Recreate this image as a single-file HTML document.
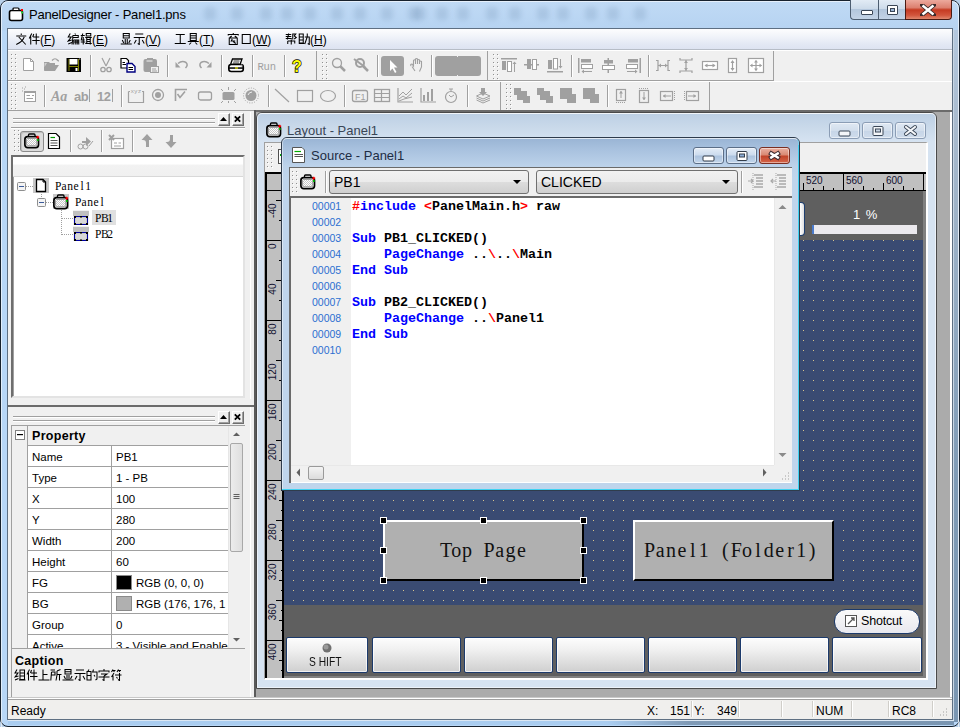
<!DOCTYPE html><html><head><meta charset="utf-8"><style>
*{box-sizing:border-box}
html,body{margin:0;padding:0;width:960px;height:727px;overflow:hidden;background:#b9d1ea}
body{position:relative;font-family:"Liberation Sans",sans-serif;font-size:12px;color:#000}
div,span{position:absolute}
.t{white-space:nowrap}
</style></head><body><div style="left:0px;top:0px;width:960px;height:727px;border:1px solid #18222e;border-radius:8px;background:linear-gradient(180deg,#c0daf5 0,#b6d3f1 29px,#b8d7f7 30px,#b8d7f7 100%)"></div>
<div style="left:204px;top:7px;width:12px;height:13px;background:rgba(70,100,140,.15);border-radius:4px;filter:blur(2.5px)"></div>
<div style="left:231px;top:7px;width:12px;height:13px;background:rgba(70,100,140,.15);border-radius:4px;filter:blur(2.5px)"></div>
<div style="left:260px;top:7px;width:12px;height:13px;background:rgba(70,100,140,.15);border-radius:4px;filter:blur(2.5px)"></div>
<div style="left:281px;top:7px;width:12px;height:13px;background:rgba(70,100,140,.15);border-radius:4px;filter:blur(2.5px)"></div>
<div style="left:304px;top:7px;width:12px;height:13px;background:rgba(70,100,140,.15);border-radius:4px;filter:blur(2.5px)"></div>
<div style="left:331px;top:7px;width:12px;height:13px;background:rgba(70,100,140,.15);border-radius:4px;filter:blur(2.5px)"></div>
<div style="left:354px;top:7px;width:12px;height:13px;background:rgba(70,100,140,.15);border-radius:4px;filter:blur(2.5px)"></div>
<div style="left:381px;top:7px;width:12px;height:13px;background:rgba(70,100,140,.15);border-radius:4px;filter:blur(2.5px)"></div>
<div style="left:408px;top:7px;width:12px;height:13px;background:rgba(70,100,140,.15);border-radius:4px;filter:blur(2.5px)"></div>
<div style="left:414px;top:7px;width:12px;height:13px;background:rgba(70,100,140,.15);border-radius:4px;filter:blur(2.5px)"></div>
<div style="left:436px;top:7px;width:12px;height:13px;background:rgba(70,100,140,.15);border-radius:4px;filter:blur(2.5px)"></div>
<div style="left:457px;top:7px;width:12px;height:13px;background:rgba(70,100,140,.15);border-radius:4px;filter:blur(2.5px)"></div>
<div style="left:486px;top:7px;width:12px;height:13px;background:rgba(70,100,140,.15);border-radius:4px;filter:blur(2.5px)"></div>
<div style="left:509px;top:7px;width:12px;height:13px;background:rgba(70,100,140,.15);border-radius:4px;filter:blur(2.5px)"></div>
<div style="left:537px;top:7px;width:12px;height:13px;background:rgba(70,100,140,.15);border-radius:4px;filter:blur(2.5px)"></div>
<div style="left:557px;top:7px;width:12px;height:13px;background:rgba(70,100,140,.15);border-radius:4px;filter:blur(2.5px)"></div>
<div style="left:585px;top:7px;width:12px;height:13px;background:rgba(70,100,140,.15);border-radius:4px;filter:blur(2.5px)"></div>
<div style="left:607px;top:7px;width:12px;height:13px;background:rgba(70,100,140,.15);border-radius:4px;filter:blur(2.5px)"></div>
<div style="left:634px;top:7px;width:12px;height:13px;background:rgba(70,100,140,.15);border-radius:4px;filter:blur(2.5px)"></div>
<div style="left:1px;top:1px;width:958px;height:726px;border:1px solid rgba(255,255,255,.6);border-bottom:none;border-radius:7px 7px 0 0"></div>
<svg style="position:absolute;left:8px;top:7px" width="16" height="15" viewBox="0 0 16 15">
<rect x="1.5" y="3.5" width="13" height="10" rx="2" fill="#fff" stroke="#000" stroke-width="1.6"/>
<rect x="5" y="1" width="6" height="2.5" rx="1" fill="#fff" stroke="#000" stroke-width="1.2"/>
<rect x="13" y="2" width="2" height="2" fill="#f00"/><rect x="13" y="4.5" width="2" height="2" fill="#3c3"/></svg>
<span class="t" style="left:29px;top:7px;font-size:13px;color:#000;letter-spacing:-.2px">PanelDesigner - Panel1.pns</span>
<div style="left:850px;top:0px;width:29px;height:20px;border:1px solid #4d5d70;border-top:none;border-right:none;border-radius:0 0 0 4px;background:linear-gradient(180deg,#e2ebf5 0,#cddbea 45%,#b3c6dc 50%,#c3d3e6 100%)"></div>
<div style="left:878px;top:0px;width:27px;height:20px;border:1px solid #4d5d70;border-top:none;border-right:none;background:linear-gradient(180deg,#e2ebf5 0,#cddbea 45%,#b3c6dc 50%,#c3d3e6 100%)"></div>
<div style="left:905px;top:0px;width:47px;height:20px;border:1px solid #4a1a12;border-top:none;border-radius:0 0 4px 0;background:linear-gradient(180deg,#eca99d 0,#dc8070 40%,#c53a22 52%,#d2553c 80%,#e0876d 100%)"></div>
<div style="left:861px;top:10px;width:12px;height:5px;background:#fff;border:1px solid #3a4656;border-radius:1px"></div>
<div style="left:887px;top:5px;width:11px;height:10px;background:#fff;border:1px solid #3a4656;border-radius:1px"></div>
<div style="left:890px;top:8px;width:5px;height:4px;background:#9eb6d6;border:1px solid #3a4656"></div>
<svg style="position:absolute;left:920px;top:4px" width="16" height="12" viewBox="0 0 16 12">
<path d="M2 1 L14 11 M14 1 L2 11" stroke="#3a2a2a" stroke-width="4.2" stroke-linecap="square"/>
<path d="M2.5 1.5 L13.5 10.5 M13.5 1.5 L2.5 10.5" stroke="#fff" stroke-width="2.4"/></svg>
<div style="left:953px;top:30px;width:1px;height:690px;background:#c8d6e4"></div>
<div style="left:954px;top:30px;width:4px;height:692px;background:linear-gradient(180deg,#b4c8de 0,#a8bacd 100px,#7f9bb6 450px,#7a96b2 100%)"></div>
<div style="left:958px;top:30px;width:1px;height:692px;background:#e4ecf6"></div>
<div style="left:8px;top:721px;width:946px;height:4px;background:linear-gradient(90deg,#aacdf0 0,#aacdf0 600px,#7f9ab6 680px,#7a96b2 100%)"></div>
<div style="left:8px;top:720px;width:946px;height:1px;background:#dce8f4"></div>
<div style="left:7px;top:28px;width:946px;height:692px;background:#5e6f82"></div>
<div style="left:8px;top:29px;width:944px;height:690px;background:#f0f0f0"></div>
<div style="left:8px;top:29px;width:944px;height:21px;background:linear-gradient(180deg,#fdfdfe 0,#f0f3f9 40%,#e3e8f4 75%,#dde3f1 100%);border-bottom:1px solid #b6bcc6"></div>
<span class="t" style="left:15px;top:33px;font-size:12px;color:#000"><svg width="12.5" height="12" viewBox="0 0 12.500 12" style="vertical-align:-1px"><path d="M6 0.5V2 M1 3H11 M3.5 4L10.5 11.5 M9 4Q7 9 1 11.5" transform="translate(0.25,0)" fill="none" stroke="#000" stroke-width="1.05"/></svg><svg width="12.5" height="12" viewBox="0 0 12.500 12" style="vertical-align:-1px"><path d="M3.5 0.5L1 5.5 M2.5 3.5V11.5 M5.5 1L4.5 4 M5 4H11 M4 7.5H11.5 M8 0.5V11.5" transform="translate(0.25,0)" fill="none" stroke="#000" stroke-width="1.05"/></svg>(<u>F</u>)</span>
<span class="t" style="left:67px;top:33px;font-size:12px;color:#000"><svg width="12.5" height="12" viewBox="0 0 12.500 12" style="vertical-align:-1px"><path d="M3 0.5L1 4H4L1 8L4.5 7 M1 11L4.5 9.5 M7.5 0.5L8.5 1.5 M5.5 2.5H11V4.5H5.5 M5.5 2.5V6L4.8 11.5 M6.5 7H11.5V11.5 M6.5 7V11.5 M8.5 7V11.5 M10 7V11.5 M6.5 9H11.5" transform="translate(0.25,0)" fill="none" stroke="#000" stroke-width="1.05"/></svg><svg width="12.5" height="12" viewBox="0 0 12.500 12" style="vertical-align:-1px"><path d="M0.5 2.5H4.5 M2.5 0.5L1 7H4.5 M0.5 9H5 M3 4V11.5 M6 0.5H10.5V3H6Z M5 4.5H11.5 M6.5 4.5V11 M10 4.5V11.5 M6.5 6.5H10 M6.5 8.5H10 M5 10.5H11.5" transform="translate(0.25,0)" fill="none" stroke="#000" stroke-width="1.05"/></svg>(<u>E</u>)</span>
<span class="t" style="left:120px;top:33px;font-size:12px;color:#000"><svg width="12.5" height="12" viewBox="0 0 12.500 12" style="vertical-align:-1px"><path d="M3 0.5H9V5H3Z M3 2.75H9 M5 6V10.5 M7 6V10.5 M2 7L3.5 10 M10 7L8.5 10 M0.5 11H11.5" transform="translate(0.25,0)" fill="none" stroke="#000" stroke-width="1.05"/></svg><svg width="12.5" height="12" viewBox="0 0 12.500 12" style="vertical-align:-1px"><path d="M2 1H10 M0.5 4.5H11.5 M6 4.5V11.5L4.5 10.5 M3 7L1 10.5 M9 7L11 10.5" transform="translate(0.25,0)" fill="none" stroke="#000" stroke-width="1.05"/></svg>(<u>V</u>)</span>
<span class="t" style="left:174px;top:33px;font-size:12px;color:#000"><svg width="12.5" height="12" viewBox="0 0 12.500 12" style="vertical-align:-1px"><path d="M1.5 1.5H10.5 M6 1.5V10.5 M0.5 10.5H11.5" transform="translate(0.25,0)" fill="none" stroke="#000" stroke-width="1.05"/></svg><svg width="12.5" height="12" viewBox="0 0 12.500 12" style="vertical-align:-1px"><path d="M3 0.5H9V7.5H3Z M3 2.75H9 M3 5H9 M0.5 8.5H11.5 M4 9.5L2 11.5 M8 9.5L10 11.5" transform="translate(0.25,0)" fill="none" stroke="#000" stroke-width="1.05"/></svg>(<u>T</u>)</span>
<span class="t" style="left:227px;top:33px;font-size:12px;color:#000"><svg width="12.5" height="12" viewBox="0 0 12.500 12" style="vertical-align:-1px"><path d="M6 0V1.2 M1 2.5V1.5H11V2.5 M4.5 3L2.5 4.5 M7.5 3L9.5 4.5 M2 5H10V11.5H2Z M5 6L4 8H8 M6 8.5L8.5 10.5" transform="translate(0.25,0)" fill="none" stroke="#000" stroke-width="1.05"/></svg><svg width="12.5" height="12" viewBox="0 0 12.500 12" style="vertical-align:-1px"><path d="M2 1.5H10V10.5H2Z" transform="translate(0.25,0)" fill="none" stroke="#000" stroke-width="1.05"/></svg>(<u>W</u>)</span>
<span class="t" style="left:285px;top:33px;font-size:12px;color:#000"><svg width="12.5" height="12" viewBox="0 0 12.500 12" style="vertical-align:-1px"><path d="M0.5 1.5H6 M0.5 3.5H6 M0.5 5.5H6.5 M3.5 0.5L2 6.5 M7.5 0.5V6.5 M7.5 1H10.5L9 3L11 4.5L9 6 M2.5 8V11 M2.5 8H9.5V10.5 M6 6.5V11.5" transform="translate(0.25,0)" fill="none" stroke="#000" stroke-width="1.05"/></svg><svg width="12.5" height="12" viewBox="0 0 12.500 12" style="vertical-align:-1px"><path d="M1 1H5V10H1Z M1 4H5 M1 7H5 M0.5 10.5H6 M6.5 4H11V11.5L9.5 10.5 M9 0.5V4L6.5 11" transform="translate(0.25,0)" fill="none" stroke="#000" stroke-width="1.05"/></svg>(<u>H</u>)</span>
<div style="left:8px;top:50px;width:944px;height:1px;background:#fff"></div>
<div style="left:8px;top:80px;width:309px;height:1px;background:#a0a0a0"></div>
<div style="left:316px;top:51px;width:1px;height:30px;background:#a0a0a0"></div>
<div style="left:317px;top:80px;width:171px;height:1px;background:#a0a0a0"></div>
<div style="left:487px;top:51px;width:1px;height:30px;background:#a0a0a0"></div>
<div style="left:488px;top:80px;width:286px;height:1px;background:#a0a0a0"></div>
<div style="left:773px;top:51px;width:1px;height:30px;background:#a0a0a0"></div>
<div style="left:8px;top:81px;width:944px;height:1px;background:#fff"></div>
<div style="left:8px;top:110px;width:493px;height:1px;background:#a0a0a0"></div>
<div style="left:500px;top:82px;width:1px;height:29px;background:#a0a0a0"></div>
<div style="left:501px;top:110px;width:209px;height:1px;background:#a0a0a0"></div>
<div style="left:709px;top:82px;width:1px;height:29px;background:#a0a0a0"></div>
<div style="left:8px;top:110px;width:246px;height:1px;background:#a0a0a0"></div>
<div style="left:8px;top:112px;width:246px;height:587px;background:#f0f0f0"></div>
<div style="left:250px;top:112px;width:1px;height:587px;background:#fff"></div>
<div style="left:254px;top:110px;width:1px;height:589px;background:#a0a0a0"></div>
<div style="left:218px;top:113px;width:12px;height:13px;background:#f0f0f0;border:1px solid;border-color:#fff #6e6e6e #6e6e6e #fff;box-shadow:inset -1px -1px 0 #a0a0a0"></div>
<div style="left:232px;top:113px;width:12px;height:13px;background:#f0f0f0;border:1px solid;border-color:#fff #6e6e6e #6e6e6e #fff;box-shadow:inset -1px -1px 0 #a0a0a0"></div>
<div style="left:20px;top:131px;width:24px;height:21px;border:1px solid #8a8a8a;border-radius:3px;background:#dcdcdc;box-shadow:inset 1px 1px 0 #c0c0c0"></div>
<div style="left:11px;top:155px;width:234px;height:243px;background:#fff;border:2px solid;border-color:#6e6e6e #e3e3e3 #e3e3e3 #6e6e6e;box-shadow:inset 1px 1px 0 #a0a0a0"></div>
<div style="left:13px;top:157px;width:230px;height:20px;background:linear-gradient(180deg,#fff 0,#fff 35%,#f2f2f2 45%,#f0f0f0 100%);border-bottom:1px solid #d8d8d8"></div>
<div style="left:33px;top:178px;width:16px;height:15px;background:#c8c8c8"></div>
<div style="left:53px;top:194px;width:16px;height:15px;background:#c8c8c8"></div>
<div style="left:73px;top:210px;width:16px;height:15px;background:#f0f0f0"></div>
<div style="left:73px;top:226px;width:16px;height:15px;background:#f0f0f0"></div>
<div style="left:92px;top:210px;width:24px;height:15px;background:#e0e0e0"></div>
<div class="t" style="left:55px;top:180px;width:36px;height:30px;font-family:'Liberation Serif',serif;font-size:11.5px;color:#000"><span style="left:0.00px;top:0;width:6.00px;text-align:center">P</span><span style="left:6.00px;top:0;width:6.00px;text-align:center">a</span><span style="left:12.00px;top:0;width:6.00px;text-align:center">n</span><span style="left:18.00px;top:0;width:6.00px;text-align:center">e</span><span style="left:24.00px;top:0;width:6.00px;text-align:center">l</span><span style="left:30.00px;top:0;width:6.00px;text-align:center">1</span></div>
<div class="t" style="left:75px;top:196px;width:30px;height:30px;font-family:'Liberation Serif',serif;font-size:11.5px;color:#000"><span style="left:0.00px;top:0;width:6.00px;text-align:center">P</span><span style="left:6.00px;top:0;width:6.00px;text-align:center">a</span><span style="left:12.00px;top:0;width:6.00px;text-align:center">n</span><span style="left:18.00px;top:0;width:6.00px;text-align:center">e</span><span style="left:24.00px;top:0;width:6.00px;text-align:center">l</span></div>
<div class="t" style="left:95px;top:212px;width:18px;height:30px;font-family:'Liberation Serif',serif;font-size:11.5px;color:#000"><span style="left:0.00px;top:0;width:6.00px;text-align:center">P</span><span style="left:6.00px;top:0;width:6.00px;text-align:center">B</span><span style="left:12.00px;top:0;width:6.00px;text-align:center">1</span></div>
<div class="t" style="left:95px;top:228px;width:18px;height:30px;font-family:'Liberation Serif',serif;font-size:11.5px;color:#000"><span style="left:0.00px;top:0;width:6.00px;text-align:center">P</span><span style="left:6.00px;top:0;width:6.00px;text-align:center">B</span><span style="left:12.00px;top:0;width:6.00px;text-align:center">2</span></div>
<div style="left:8px;top:399px;width:246px;height:6px;background:#f0f0f0"></div>
<div style="left:8px;top:405px;width:246px;height:2px;background:#6b6b6b"></div>
<div style="left:218px;top:411px;width:12px;height:13px;background:#f0f0f0;border:1px solid;border-color:#fff #6e6e6e #6e6e6e #fff;box-shadow:inset -1px -1px 0 #a0a0a0"></div>
<div style="left:232px;top:411px;width:12px;height:13px;background:#f0f0f0;border:1px solid;border-color:#fff #6e6e6e #6e6e6e #fff;box-shadow:inset -1px -1px 0 #a0a0a0"></div>
<div style="left:11px;top:425px;width:234px;height:224px;background:#f0f0f0;border-left:1px solid #a0a0a0;border-top:1px solid #a0a0a0"></div>
<div style="left:27px;top:445px;width:201px;height:204px;background:#fff"></div>
<div style="left:27px;top:426px;width:201px;height:20px;background:#f0f0f0;border-left:1px solid #a0a0a0;border-bottom:1px solid #a0a0a0"></div>
<span class="t" style="left:32px;top:429px;font-size:12.5px;font-weight:bold;color:#000;letter-spacing:.3px">Property</span>
<div style="left:27px;top:445px;width:201px;height:203px;overflow:hidden">
<div style="left:0;top:0px;width:201px;height:22px;border-left:1px solid #a0a0a0;border-bottom:1px solid #a0a0a0"></div>
<div style="left:84px;top:0px;width:1px;height:22px;background:#a0a0a0"></div>
<span class="t" style="left:5px;top:6px;font-size:11.5px;color:#000">Name</span>
<span class="t" style="left:89px;top:6px;font-size:11.5px;color:#000">PB1</span>
<div style="left:0;top:21px;width:201px;height:22px;border-left:1px solid #a0a0a0;border-bottom:1px solid #a0a0a0"></div>
<div style="left:84px;top:21px;width:1px;height:22px;background:#a0a0a0"></div>
<span class="t" style="left:5px;top:27px;font-size:11.5px;color:#000">Type</span>
<span class="t" style="left:89px;top:27px;font-size:11.5px;color:#000">1 - PB</span>
<div style="left:0;top:42px;width:201px;height:22px;border-left:1px solid #a0a0a0;border-bottom:1px solid #a0a0a0"></div>
<div style="left:84px;top:42px;width:1px;height:22px;background:#a0a0a0"></div>
<span class="t" style="left:5px;top:48px;font-size:11.5px;color:#000">X</span>
<span class="t" style="left:89px;top:48px;font-size:11.5px;color:#000">100</span>
<div style="left:0;top:63px;width:201px;height:22px;border-left:1px solid #a0a0a0;border-bottom:1px solid #a0a0a0"></div>
<div style="left:84px;top:63px;width:1px;height:22px;background:#a0a0a0"></div>
<span class="t" style="left:5px;top:69px;font-size:11.5px;color:#000">Y</span>
<span class="t" style="left:89px;top:69px;font-size:11.5px;color:#000">280</span>
<div style="left:0;top:84px;width:201px;height:22px;border-left:1px solid #a0a0a0;border-bottom:1px solid #a0a0a0"></div>
<div style="left:84px;top:84px;width:1px;height:22px;background:#a0a0a0"></div>
<span class="t" style="left:5px;top:90px;font-size:11.5px;color:#000">Width</span>
<span class="t" style="left:89px;top:90px;font-size:11.5px;color:#000">200</span>
<div style="left:0;top:105px;width:201px;height:22px;border-left:1px solid #a0a0a0;border-bottom:1px solid #a0a0a0"></div>
<div style="left:84px;top:105px;width:1px;height:22px;background:#a0a0a0"></div>
<span class="t" style="left:5px;top:111px;font-size:11.5px;color:#000">Height</span>
<span class="t" style="left:89px;top:111px;font-size:11.5px;color:#000">60</span>
<div style="left:0;top:126px;width:201px;height:22px;border-left:1px solid #a0a0a0;border-bottom:1px solid #a0a0a0"></div>
<div style="left:84px;top:126px;width:1px;height:22px;background:#a0a0a0"></div>
<span class="t" style="left:5px;top:132px;font-size:11.5px;color:#000">FG</span>
<div style="left:89px;top:130px;width:16px;height:15px;border:1px solid #8a8a8a;background:#000"></div>
<span class="t" style="left:109px;top:132px;font-size:11.5px;color:#000">RGB (0, 0, 0)</span>
<div style="left:0;top:147px;width:201px;height:22px;border-left:1px solid #a0a0a0;border-bottom:1px solid #a0a0a0"></div>
<div style="left:84px;top:147px;width:1px;height:22px;background:#a0a0a0"></div>
<span class="t" style="left:5px;top:153px;font-size:11.5px;color:#000">BG</span>
<div style="left:89px;top:151px;width:16px;height:15px;border:1px solid #8a8a8a;background:#b0b0b0"></div>
<span class="t" style="left:109px;top:153px;font-size:11.5px;color:#000">RGB (176, 176, 1</span>
<div style="left:0;top:168px;width:201px;height:22px;border-left:1px solid #a0a0a0;border-bottom:1px solid #a0a0a0"></div>
<div style="left:84px;top:168px;width:1px;height:22px;background:#a0a0a0"></div>
<span class="t" style="left:5px;top:174px;font-size:11.5px;color:#000">Group</span>
<span class="t" style="left:89px;top:174px;font-size:11.5px;color:#000">0</span>
<div style="left:0;top:189px;width:201px;height:22px;border-left:1px solid #a0a0a0;border-bottom:1px solid #a0a0a0"></div>
<div style="left:84px;top:189px;width:1px;height:22px;background:#a0a0a0"></div>
<span class="t" style="left:5px;top:195px;font-size:11.5px;color:#000">Active</span>
<span class="t" style="left:89px;top:195px;font-size:11.5px;color:#000">3 - Visible and Enabled</span>
</div>
<div style="left:228px;top:426px;width:17px;height:222px;background:#f0f0f0;border-left:1px solid #e6e6e6"></div>
<div style="left:230px;top:443px;width:13px;height:109px;background:linear-gradient(90deg,#ececec,#dedede);border:1px solid #a8a8a8;border-radius:2px"></div>
<div style="left:11px;top:648px;width:234px;height:50px;background:#f0f0f0;border-top:1px solid #a0a0a0;border-left:1px solid #a0a0a0"></div>
<span class="t" style="left:15px;top:654px;font-size:12.5px;font-weight:bold;color:#000;letter-spacing:.3px">Caption</span>
<span class="t" style="left:14px;top:669px;font-size:12px;color:#000"><svg width="12" height="12" viewBox="0 0 12.000 12" style="vertical-align:-1px"><path d="M3 0.5L1 4H4L1 8L4.5 7 M1 11L4.5 9.5 M6 1H10.5V10.5H6Z M6 4H10.5 M6 7H10.5 M5 11H11.5" transform="translate(0.00,0)" fill="none" stroke="#000" stroke-width="1.05"/></svg><svg width="12" height="12" viewBox="0 0 12.000 12" style="vertical-align:-1px"><path d="M3.5 0.5L1 5.5 M2.5 3.5V11.5 M5.5 1L4.5 4 M5 4H11 M4 7.5H11.5 M8 0.5V11.5" transform="translate(0.00,0)" fill="none" stroke="#000" stroke-width="1.05"/></svg><svg width="12" height="12" viewBox="0 0 12.000 12" style="vertical-align:-1px"><path d="M5 0.5V11 M5 5.5H9.5 M0.5 11H11.5" transform="translate(0.00,0)" fill="none" stroke="#000" stroke-width="1.05"/></svg><svg width="12" height="12" viewBox="0 0 12.000 12" style="vertical-align:-1px"><path d="M0.5 1H5 M1.5 3H5V6H1.5 M1.5 3L0.8 11.5 M10.5 0.5L7 2 M7 2V6L6 11.5 M7 5.5H11.5 M9.5 5.5V11.5" transform="translate(0.00,0)" fill="none" stroke="#000" stroke-width="1.05"/></svg><svg width="12" height="12" viewBox="0 0 12.000 12" style="vertical-align:-1px"><path d="M3 0.5H9V5H3Z M3 2.75H9 M5 6V10.5 M7 6V10.5 M2 7L3.5 10 M10 7L8.5 10 M0.5 11H11.5" transform="translate(0.00,0)" fill="none" stroke="#000" stroke-width="1.05"/></svg><svg width="12" height="12" viewBox="0 0 12.000 12" style="vertical-align:-1px"><path d="M2 1H10 M0.5 4.5H11.5 M6 4.5V11.5L4.5 10.5 M3 7L1 10.5 M9 7L11 10.5" transform="translate(0.00,0)" fill="none" stroke="#000" stroke-width="1.05"/></svg><svg width="12" height="12" viewBox="0 0 12.000 12" style="vertical-align:-1px"><path d="M3 0.5L2 2 M1 2.5H5V11H1Z M1 6.5H5 M7.5 0.5L6.5 3.5 M7 3H11V10L9.5 11 M8 6L9 7.5" transform="translate(0.00,0)" fill="none" stroke="#000" stroke-width="1.05"/></svg><svg width="12" height="12" viewBox="0 0 12.000 12" style="vertical-align:-1px"><path d="M6 0V1.5 M1 3.5V2H11V3.5 M3 5H9L6 7 M6 7V11.5L4.5 10.5 M0.5 8H11.5" transform="translate(0.00,0)" fill="none" stroke="#000" stroke-width="1.05"/></svg><svg width="12" height="12" viewBox="0 0 12.000 12" style="vertical-align:-1px"><path d="M3 0.5L1.5 3 M2.5 1.5H5.5 M3.5 2L4.5 3 M8.5 0.5L7 3 M8 1.5H11 M9 2L10 3 M4 4L1.5 8 M3 6.5V11.5 M5 6H11.5 M9.5 4V11.5L8 10.5 M6.5 8L7.5 9.5" transform="translate(0.00,0)" fill="none" stroke="#000" stroke-width="1.05"/></svg></span>
<div style="left:254px;top:110px;width:698px;height:589px;background:#ababab"></div>
<div style="left:255px;top:110px;width:697px;height:2px;background:#6b6b6b"></div>
<div style="left:254px;top:110px;width:2px;height:589px;background:#5a5a5a"></div>
<div style="left:950px;top:112px;width:2px;height:587px;background:#fff"></div>
<div style="left:256px;top:112px;width:681px;height:577px;border:1px solid #4a4a4a;border-radius:6px 6px 0 0;background:linear-gradient(180deg,#bccfe4 0,#c9d9ea 14px,#d6e3f1 29px,#d6e3f1 100%)"></div>
<div style="left:257px;top:113px;width:679px;height:575px;border:1px solid rgba(255,255,255,.55);border-top-color:rgba(255,255,255,.8);border-radius:5px 5px 0 0"></div>
<span class="t" style="left:287px;top:123px;font-size:13px;color:#3a4656">Layout - Panel1</span>
<div style="left:829px;top:122px;width:31px;height:17px;border:1px solid #8b9db5;border-radius:3px;background:linear-gradient(180deg,#dfe8f3 0,#d2deec 50%,#c6d5e7 51%,#cfdcec 100%);box-shadow:inset 0 0 0 1px rgba(255,255,255,.5)"></div>
<div style="left:862px;top:122px;width:31px;height:17px;border:1px solid #8b9db5;border-radius:3px;background:linear-gradient(180deg,#dfe8f3 0,#d2deec 50%,#c6d5e7 51%,#cfdcec 100%);box-shadow:inset 0 0 0 1px rgba(255,255,255,.5)"></div>
<div style="left:895px;top:122px;width:31px;height:17px;border:1px solid #8b9db5;border-radius:3px;background:linear-gradient(180deg,#dfe8f3 0,#d2deec 50%,#c6d5e7 51%,#cfdcec 100%);box-shadow:inset 0 0 0 1px rgba(255,255,255,.5)"></div>
<div style="left:264px;top:142px;width:664px;height:538px;background:#f0f0f0;border-left:1px solid #a0a0a0;border-top:1px solid #a0a0a0;border-right:2px solid #fff;border-bottom:2px solid #fff"></div>
<div style="left:278px;top:149px;width:8px;height:15px;background:#fff;border:1px solid #505050"></div>
<div style="left:265px;top:172px;width:661px;height:506px;background:#808080"></div>
<div style="left:284px;top:191px;width:639px;height:485px;background:#5f5f5f"></div>
<svg style="position:absolute;left:284px;top:240px" width="639" height="365"><defs><pattern id="dp" x="-1" y="0" width="10" height="10" patternUnits="userSpaceOnUse"><rect x="0" y="0" width="1" height="1" fill="#d9c48e"/></pattern></defs><rect width="639" height="365" fill="#3a4b72"/><rect width="639" height="365" fill="url(#dp)"/></svg>
<div style="left:265px;top:172px;width:19px;height:506px;background:#c0c0c0;border-left:2px solid #000"></div>
<div style="left:265px;top:172px;width:661px;height:19px;background:#c0c0c0;border-top:2px solid #000;border-bottom:1px solid #000"></div>
<div style="left:265px;top:172px;width:19px;height:19px;background:#c0c0c0;border:2px solid #000;border-top-width:2px;border-right-width:2px;border-bottom-width:1px"></div>
<div style="left:282px;top:191px;width:2px;height:487px;background:#000"></div>
<svg style="position:absolute;left:265px;top:172px;overflow:hidden" width="661" height="506"><g transform="translate(-265,-172)"><rect x="293" y="188" width="1" height="2" fill="#000"/><rect x="303" y="186" width="1" height="4" fill="#000"/><rect x="313" y="188" width="1" height="2" fill="#000"/><rect x="323" y="183" width="1" height="7" fill="#000"/><rect x="333" y="188" width="1" height="2" fill="#000"/><rect x="343" y="186" width="1" height="4" fill="#000"/><rect x="353" y="188" width="1" height="2" fill="#000"/><rect x="363" y="174" width="1" height="16" fill="#000"/><rect x="373" y="188" width="1" height="2" fill="#000"/><rect x="383" y="186" width="1" height="4" fill="#000"/><rect x="393" y="188" width="1" height="2" fill="#000"/><rect x="403" y="183" width="1" height="7" fill="#000"/><rect x="413" y="188" width="1" height="2" fill="#000"/><rect x="423" y="186" width="1" height="4" fill="#000"/><rect x="433" y="188" width="1" height="2" fill="#000"/><rect x="443" y="174" width="1" height="16" fill="#000"/><rect x="453" y="188" width="1" height="2" fill="#000"/><rect x="463" y="186" width="1" height="4" fill="#000"/><rect x="473" y="188" width="1" height="2" fill="#000"/><rect x="483" y="183" width="1" height="7" fill="#000"/><rect x="493" y="188" width="1" height="2" fill="#000"/><rect x="503" y="186" width="1" height="4" fill="#000"/><rect x="513" y="188" width="1" height="2" fill="#000"/><rect x="523" y="174" width="1" height="16" fill="#000"/><rect x="533" y="188" width="1" height="2" fill="#000"/><rect x="543" y="186" width="1" height="4" fill="#000"/><rect x="553" y="188" width="1" height="2" fill="#000"/><rect x="563" y="183" width="1" height="7" fill="#000"/><rect x="573" y="188" width="1" height="2" fill="#000"/><rect x="583" y="186" width="1" height="4" fill="#000"/><rect x="593" y="188" width="1" height="2" fill="#000"/><rect x="603" y="174" width="1" height="16" fill="#000"/><rect x="613" y="188" width="1" height="2" fill="#000"/><rect x="623" y="186" width="1" height="4" fill="#000"/><rect x="633" y="188" width="1" height="2" fill="#000"/><rect x="643" y="183" width="1" height="7" fill="#000"/><rect x="653" y="188" width="1" height="2" fill="#000"/><rect x="663" y="186" width="1" height="4" fill="#000"/><rect x="673" y="188" width="1" height="2" fill="#000"/><rect x="683" y="174" width="1" height="16" fill="#000"/><rect x="693" y="188" width="1" height="2" fill="#000"/><rect x="703" y="186" width="1" height="4" fill="#000"/><rect x="713" y="188" width="1" height="2" fill="#000"/><rect x="723" y="183" width="1" height="7" fill="#000"/><rect x="733" y="188" width="1" height="2" fill="#000"/><rect x="743" y="186" width="1" height="4" fill="#000"/><rect x="753" y="188" width="1" height="2" fill="#000"/><rect x="763" y="174" width="1" height="16" fill="#000"/><rect x="773" y="188" width="1" height="2" fill="#000"/><rect x="783" y="186" width="1" height="4" fill="#000"/><rect x="793" y="188" width="1" height="2" fill="#000"/><rect x="803" y="183" width="1" height="7" fill="#000"/><rect x="813" y="188" width="1" height="2" fill="#000"/><rect x="823" y="186" width="1" height="4" fill="#000"/><rect x="833" y="188" width="1" height="2" fill="#000"/><rect x="843" y="174" width="1" height="16" fill="#000"/><rect x="853" y="188" width="1" height="2" fill="#000"/><rect x="863" y="186" width="1" height="4" fill="#000"/><rect x="873" y="188" width="1" height="2" fill="#000"/><rect x="883" y="183" width="1" height="7" fill="#000"/><rect x="893" y="188" width="1" height="2" fill="#000"/><rect x="903" y="186" width="1" height="4" fill="#000"/><rect x="913" y="188" width="1" height="2" fill="#000"/><rect x="923" y="174" width="1" height="16" fill="#000"/><rect x="923" y="174" width="1" height="16" fill="#000"/><text x="286" y="183.5" font-family="Liberation Sans" font-size="10" fill="#101030">0</text><text x="326" y="183.5" font-family="Liberation Sans" font-size="10" fill="#101030">40</text><text x="366" y="183.5" font-family="Liberation Sans" font-size="10" fill="#101030">80</text><text x="406" y="183.5" font-family="Liberation Sans" font-size="10" fill="#101030">120</text><text x="446" y="183.5" font-family="Liberation Sans" font-size="10" fill="#101030">160</text><text x="486" y="183.5" font-family="Liberation Sans" font-size="10" fill="#101030">200</text><text x="526" y="183.5" font-family="Liberation Sans" font-size="10" fill="#101030">240</text><text x="566" y="183.5" font-family="Liberation Sans" font-size="10" fill="#101030">280</text><text x="606" y="183.5" font-family="Liberation Sans" font-size="10" fill="#101030">320</text><text x="646" y="183.5" font-family="Liberation Sans" font-size="10" fill="#101030">360</text><text x="686" y="183.5" font-family="Liberation Sans" font-size="10" fill="#101030">400</text><text x="726" y="183.5" font-family="Liberation Sans" font-size="10" fill="#101030">440</text><text x="766" y="183.5" font-family="Liberation Sans" font-size="10" fill="#101030">480</text><text x="806" y="183.5" font-family="Liberation Sans" font-size="10" fill="#101030">520</text><text x="846" y="183.5" font-family="Liberation Sans" font-size="10" fill="#101030">560</text><text x="886" y="183.5" font-family="Liberation Sans" font-size="10" fill="#101030">600</text><rect x="276" y="200" width="7" height="1" fill="#000"/><rect x="281" y="210" width="2" height="1" fill="#000"/><rect x="279" y="220" width="4" height="1" fill="#000"/><rect x="281" y="230" width="2" height="1" fill="#000"/><rect x="267" y="240" width="16" height="1" fill="#000"/><rect x="281" y="250" width="2" height="1" fill="#000"/><rect x="279" y="260" width="4" height="1" fill="#000"/><rect x="281" y="270" width="2" height="1" fill="#000"/><rect x="276" y="280" width="7" height="1" fill="#000"/><rect x="281" y="290" width="2" height="1" fill="#000"/><rect x="279" y="300" width="4" height="1" fill="#000"/><rect x="281" y="310" width="2" height="1" fill="#000"/><rect x="267" y="320" width="16" height="1" fill="#000"/><rect x="281" y="330" width="2" height="1" fill="#000"/><rect x="279" y="340" width="4" height="1" fill="#000"/><rect x="281" y="350" width="2" height="1" fill="#000"/><rect x="276" y="360" width="7" height="1" fill="#000"/><rect x="281" y="370" width="2" height="1" fill="#000"/><rect x="279" y="380" width="4" height="1" fill="#000"/><rect x="281" y="390" width="2" height="1" fill="#000"/><rect x="267" y="400" width="16" height="1" fill="#000"/><rect x="281" y="410" width="2" height="1" fill="#000"/><rect x="279" y="420" width="4" height="1" fill="#000"/><rect x="281" y="430" width="2" height="1" fill="#000"/><rect x="276" y="440" width="7" height="1" fill="#000"/><rect x="281" y="450" width="2" height="1" fill="#000"/><rect x="279" y="460" width="4" height="1" fill="#000"/><rect x="281" y="470" width="2" height="1" fill="#000"/><rect x="267" y="480" width="16" height="1" fill="#000"/><rect x="281" y="490" width="2" height="1" fill="#000"/><rect x="279" y="500" width="4" height="1" fill="#000"/><rect x="281" y="510" width="2" height="1" fill="#000"/><rect x="276" y="520" width="7" height="1" fill="#000"/><rect x="281" y="530" width="2" height="1" fill="#000"/><rect x="279" y="540" width="4" height="1" fill="#000"/><rect x="281" y="550" width="2" height="1" fill="#000"/><rect x="267" y="560" width="16" height="1" fill="#000"/><rect x="281" y="570" width="2" height="1" fill="#000"/><rect x="279" y="580" width="4" height="1" fill="#000"/><rect x="281" y="590" width="2" height="1" fill="#000"/><rect x="276" y="600" width="7" height="1" fill="#000"/><rect x="281" y="610" width="2" height="1" fill="#000"/><rect x="279" y="620" width="4" height="1" fill="#000"/><rect x="281" y="630" width="2" height="1" fill="#000"/><rect x="267" y="640" width="16" height="1" fill="#000"/><rect x="281" y="650" width="2" height="1" fill="#000"/><rect x="279" y="660" width="4" height="1" fill="#000"/><rect x="281" y="670" width="2" height="1" fill="#000"/><text transform="translate(275.5,203.5) rotate(-90)" text-anchor="end" font-family="Liberation Sans" font-size="10" fill="#101030">-40</text><text transform="translate(275.5,243.5) rotate(-90)" text-anchor="end" font-family="Liberation Sans" font-size="10" fill="#101030">0</text><text transform="translate(275.5,283.5) rotate(-90)" text-anchor="end" font-family="Liberation Sans" font-size="10" fill="#101030">40</text><text transform="translate(275.5,323.5) rotate(-90)" text-anchor="end" font-family="Liberation Sans" font-size="10" fill="#101030">80</text><text transform="translate(275.5,363.5) rotate(-90)" text-anchor="end" font-family="Liberation Sans" font-size="10" fill="#101030">120</text><text transform="translate(275.5,403.5) rotate(-90)" text-anchor="end" font-family="Liberation Sans" font-size="10" fill="#101030">160</text><text transform="translate(275.5,443.5) rotate(-90)" text-anchor="end" font-family="Liberation Sans" font-size="10" fill="#101030">200</text><text transform="translate(275.5,483.5) rotate(-90)" text-anchor="end" font-family="Liberation Sans" font-size="10" fill="#101030">240</text><text transform="translate(275.5,523.5) rotate(-90)" text-anchor="end" font-family="Liberation Sans" font-size="10" fill="#101030">280</text><text transform="translate(275.5,563.5) rotate(-90)" text-anchor="end" font-family="Liberation Sans" font-size="10" fill="#101030">320</text><text transform="translate(275.5,603.5) rotate(-90)" text-anchor="end" font-family="Liberation Sans" font-size="10" fill="#101030">360</text><text transform="translate(275.5,643.5) rotate(-90)" text-anchor="end" font-family="Liberation Sans" font-size="10" fill="#101030">400</text><text transform="translate(275.5,683.5) rotate(-90)" text-anchor="end" font-family="Liberation Sans" font-size="10" fill="#101030">440</text></g></svg>
<div style="left:800px;top:202px;width:5px;height:34px;background:linear-gradient(90deg,#fff,#dedede);border:1px solid #1f3f6f;border-left:none;border-radius:0 4px 4px 0"></div>
<span class="t" style="left:853px;top:207px;font-size:13px;color:#fff;letter-spacing:1px">1 %</span>
<div style="left:812px;top:225px;width:105px;height:9px;background:#ebe9ed;border-left:2px solid #4a7acc"></div>
<div style="left:383px;top:520px;width:201px;height:61px;background:#b0b0b0;border:2px solid;border-color:#fff #000 #000 #fff"></div>
<div class="t" style="left:440px;top:539px;width:87px;height:30px;font-family:'Liberation Serif',serif;font-size:20px;color:#111"><span style="left:0.00px;top:0;width:10.85px;text-align:center">T</span><span style="left:10.85px;top:0;width:10.85px;text-align:center">o</span><span style="left:21.70px;top:0;width:10.85px;text-align:center">p</span><span style="left:43.40px;top:0;width:10.85px;text-align:center">P</span><span style="left:54.25px;top:0;width:10.85px;text-align:center">a</span><span style="left:65.10px;top:0;width:10.85px;text-align:center">g</span><span style="left:75.95px;top:0;width:10.85px;text-align:center">e</span></div>
<div style="left:633px;top:520px;width:201px;height:61px;background:#b0b0b0;border:2px solid;border-color:#fff #000 #000 #fff"></div>
<div class="t" style="left:644px;top:539px;width:174px;height:30px;font-family:'Liberation Serif',serif;font-size:20px;color:#111"><span style="left:0.00px;top:0;width:10.85px;text-align:center">P</span><span style="left:10.85px;top:0;width:10.85px;text-align:center">a</span><span style="left:21.70px;top:0;width:10.85px;text-align:center">n</span><span style="left:32.55px;top:0;width:10.85px;text-align:center">e</span><span style="left:43.40px;top:0;width:10.85px;text-align:center">l</span><span style="left:54.25px;top:0;width:10.85px;text-align:center">1</span><span style="left:75.95px;top:0;width:10.85px;text-align:center">(</span><span style="left:86.80px;top:0;width:10.85px;text-align:center">F</span><span style="left:97.65px;top:0;width:10.85px;text-align:center">o</span><span style="left:108.50px;top:0;width:10.85px;text-align:center">l</span><span style="left:119.35px;top:0;width:10.85px;text-align:center">d</span><span style="left:130.20px;top:0;width:10.85px;text-align:center">e</span><span style="left:141.05px;top:0;width:10.85px;text-align:center">r</span><span style="left:151.90px;top:0;width:10.85px;text-align:center">1</span><span style="left:162.75px;top:0;width:10.85px;text-align:center">)</span></div>
<div style="left:834px;top:609px;width:86px;height:25px;border:1px solid #1c3a6b;border-radius:12px;background:linear-gradient(180deg,#fafafa,#e8e8ee)"></div>
<span class="t" style="left:861px;top:614px;font-size:12.5px;color:#000;letter-spacing:-.2px">Shotcut</span>
<div style="left:286px;top:637px;width:82px;height:36px;border:1px solid #1c3a6b;border-radius:2px;background:linear-gradient(180deg,#fdfdfd 0,#f0f0f0 35%,#cfcfcf 100%);box-shadow:inset 0 0 0 1px rgba(255,255,255,.7)"></div>
<div style="left:372px;top:637px;width:89px;height:36px;border:1px solid #1c3a6b;border-radius:2px;background:linear-gradient(180deg,#fdfdfd 0,#f0f0f0 35%,#cfcfcf 100%);box-shadow:inset 0 0 0 1px rgba(255,255,255,.7)"></div>
<div style="left:464px;top:637px;width:89px;height:36px;border:1px solid #1c3a6b;border-radius:2px;background:linear-gradient(180deg,#fdfdfd 0,#f0f0f0 35%,#cfcfcf 100%);box-shadow:inset 0 0 0 1px rgba(255,255,255,.7)"></div>
<div style="left:556px;top:637px;width:89px;height:36px;border:1px solid #1c3a6b;border-radius:2px;background:linear-gradient(180deg,#fdfdfd 0,#f0f0f0 35%,#cfcfcf 100%);box-shadow:inset 0 0 0 1px rgba(255,255,255,.7)"></div>
<div style="left:648px;top:637px;width:89px;height:36px;border:1px solid #1c3a6b;border-radius:2px;background:linear-gradient(180deg,#fdfdfd 0,#f0f0f0 35%,#cfcfcf 100%);box-shadow:inset 0 0 0 1px rgba(255,255,255,.7)"></div>
<div style="left:740px;top:637px;width:89px;height:36px;border:1px solid #1c3a6b;border-radius:2px;background:linear-gradient(180deg,#fdfdfd 0,#f0f0f0 35%,#cfcfcf 100%);box-shadow:inset 0 0 0 1px rgba(255,255,255,.7)"></div>
<div style="left:832px;top:637px;width:90px;height:36px;border:1px solid #1c3a6b;border-radius:2px;background:linear-gradient(180deg,#fdfdfd 0,#f0f0f0 35%,#cfcfcf 100%);box-shadow:inset 0 0 0 1px rgba(255,255,255,.7)"></div>
<span class="t" style="left:309px;top:655px;font-size:12.5px;color:#111;transform:scaleX(.82);transform-origin:0 0">S HIFT</span>
<svg style="position:absolute;left:0;top:0" width="960" height="727"><defs><pattern id="hatch" width="2" height="2" patternUnits="userSpaceOnUse"><rect width="2" height="2" fill="#fff"/><rect width="1" height="1" fill="#c8c8c8"/><rect x="1" y="1" width="1" height="1" fill="#c8c8c8"/></pattern></defs><rect x="11" y="54" width="1" height="1" fill="#909090"/><rect x="12" y="55" width="1" height="1" fill="#fff"/><rect x="15" y="54" width="1" height="1" fill="#909090"/><rect x="16" y="55" width="1" height="1" fill="#fff"/><rect x="11" y="58" width="1" height="1" fill="#909090"/><rect x="12" y="59" width="1" height="1" fill="#fff"/><rect x="15" y="58" width="1" height="1" fill="#909090"/><rect x="16" y="59" width="1" height="1" fill="#fff"/><rect x="11" y="62" width="1" height="1" fill="#909090"/><rect x="12" y="63" width="1" height="1" fill="#fff"/><rect x="15" y="62" width="1" height="1" fill="#909090"/><rect x="16" y="63" width="1" height="1" fill="#fff"/><rect x="11" y="66" width="1" height="1" fill="#909090"/><rect x="12" y="67" width="1" height="1" fill="#fff"/><rect x="15" y="66" width="1" height="1" fill="#909090"/><rect x="16" y="67" width="1" height="1" fill="#fff"/><rect x="11" y="70" width="1" height="1" fill="#909090"/><rect x="12" y="71" width="1" height="1" fill="#fff"/><rect x="15" y="70" width="1" height="1" fill="#909090"/><rect x="16" y="71" width="1" height="1" fill="#fff"/><rect x="11" y="74" width="1" height="1" fill="#909090"/><rect x="12" y="75" width="1" height="1" fill="#fff"/><rect x="15" y="74" width="1" height="1" fill="#909090"/><rect x="16" y="75" width="1" height="1" fill="#fff"/><rect x="11" y="78" width="1" height="1" fill="#909090"/><rect x="12" y="79" width="1" height="1" fill="#fff"/><rect x="15" y="78" width="1" height="1" fill="#909090"/><rect x="16" y="79" width="1" height="1" fill="#fff"/><rect x="322" y="54" width="1" height="1" fill="#909090"/><rect x="323" y="55" width="1" height="1" fill="#fff"/><rect x="326" y="54" width="1" height="1" fill="#909090"/><rect x="327" y="55" width="1" height="1" fill="#fff"/><rect x="322" y="58" width="1" height="1" fill="#909090"/><rect x="323" y="59" width="1" height="1" fill="#fff"/><rect x="326" y="58" width="1" height="1" fill="#909090"/><rect x="327" y="59" width="1" height="1" fill="#fff"/><rect x="322" y="62" width="1" height="1" fill="#909090"/><rect x="323" y="63" width="1" height="1" fill="#fff"/><rect x="326" y="62" width="1" height="1" fill="#909090"/><rect x="327" y="63" width="1" height="1" fill="#fff"/><rect x="322" y="66" width="1" height="1" fill="#909090"/><rect x="323" y="67" width="1" height="1" fill="#fff"/><rect x="326" y="66" width="1" height="1" fill="#909090"/><rect x="327" y="67" width="1" height="1" fill="#fff"/><rect x="322" y="70" width="1" height="1" fill="#909090"/><rect x="323" y="71" width="1" height="1" fill="#fff"/><rect x="326" y="70" width="1" height="1" fill="#909090"/><rect x="327" y="71" width="1" height="1" fill="#fff"/><rect x="322" y="74" width="1" height="1" fill="#909090"/><rect x="323" y="75" width="1" height="1" fill="#fff"/><rect x="326" y="74" width="1" height="1" fill="#909090"/><rect x="327" y="75" width="1" height="1" fill="#fff"/><rect x="322" y="78" width="1" height="1" fill="#909090"/><rect x="323" y="79" width="1" height="1" fill="#fff"/><rect x="326" y="78" width="1" height="1" fill="#909090"/><rect x="327" y="79" width="1" height="1" fill="#fff"/><rect x="493" y="54" width="1" height="1" fill="#909090"/><rect x="494" y="55" width="1" height="1" fill="#fff"/><rect x="497" y="54" width="1" height="1" fill="#909090"/><rect x="498" y="55" width="1" height="1" fill="#fff"/><rect x="493" y="58" width="1" height="1" fill="#909090"/><rect x="494" y="59" width="1" height="1" fill="#fff"/><rect x="497" y="58" width="1" height="1" fill="#909090"/><rect x="498" y="59" width="1" height="1" fill="#fff"/><rect x="493" y="62" width="1" height="1" fill="#909090"/><rect x="494" y="63" width="1" height="1" fill="#fff"/><rect x="497" y="62" width="1" height="1" fill="#909090"/><rect x="498" y="63" width="1" height="1" fill="#fff"/><rect x="493" y="66" width="1" height="1" fill="#909090"/><rect x="494" y="67" width="1" height="1" fill="#fff"/><rect x="497" y="66" width="1" height="1" fill="#909090"/><rect x="498" y="67" width="1" height="1" fill="#fff"/><rect x="493" y="70" width="1" height="1" fill="#909090"/><rect x="494" y="71" width="1" height="1" fill="#fff"/><rect x="497" y="70" width="1" height="1" fill="#909090"/><rect x="498" y="71" width="1" height="1" fill="#fff"/><rect x="493" y="74" width="1" height="1" fill="#909090"/><rect x="494" y="75" width="1" height="1" fill="#fff"/><rect x="497" y="74" width="1" height="1" fill="#909090"/><rect x="498" y="75" width="1" height="1" fill="#fff"/><rect x="493" y="78" width="1" height="1" fill="#909090"/><rect x="494" y="79" width="1" height="1" fill="#fff"/><rect x="497" y="78" width="1" height="1" fill="#909090"/><rect x="498" y="79" width="1" height="1" fill="#fff"/><rect x="11" y="84" width="1" height="1" fill="#909090"/><rect x="12" y="85" width="1" height="1" fill="#fff"/><rect x="15" y="84" width="1" height="1" fill="#909090"/><rect x="16" y="85" width="1" height="1" fill="#fff"/><rect x="11" y="88" width="1" height="1" fill="#909090"/><rect x="12" y="89" width="1" height="1" fill="#fff"/><rect x="15" y="88" width="1" height="1" fill="#909090"/><rect x="16" y="89" width="1" height="1" fill="#fff"/><rect x="11" y="92" width="1" height="1" fill="#909090"/><rect x="12" y="93" width="1" height="1" fill="#fff"/><rect x="15" y="92" width="1" height="1" fill="#909090"/><rect x="16" y="93" width="1" height="1" fill="#fff"/><rect x="11" y="96" width="1" height="1" fill="#909090"/><rect x="12" y="97" width="1" height="1" fill="#fff"/><rect x="15" y="96" width="1" height="1" fill="#909090"/><rect x="16" y="97" width="1" height="1" fill="#fff"/><rect x="11" y="100" width="1" height="1" fill="#909090"/><rect x="12" y="101" width="1" height="1" fill="#fff"/><rect x="15" y="100" width="1" height="1" fill="#909090"/><rect x="16" y="101" width="1" height="1" fill="#fff"/><rect x="11" y="104" width="1" height="1" fill="#909090"/><rect x="12" y="105" width="1" height="1" fill="#fff"/><rect x="15" y="104" width="1" height="1" fill="#909090"/><rect x="16" y="105" width="1" height="1" fill="#fff"/><rect x="11" y="108" width="1" height="1" fill="#909090"/><rect x="12" y="109" width="1" height="1" fill="#fff"/><rect x="15" y="108" width="1" height="1" fill="#909090"/><rect x="16" y="109" width="1" height="1" fill="#fff"/><rect x="506" y="84" width="1" height="1" fill="#909090"/><rect x="507" y="85" width="1" height="1" fill="#fff"/><rect x="510" y="84" width="1" height="1" fill="#909090"/><rect x="511" y="85" width="1" height="1" fill="#fff"/><rect x="506" y="88" width="1" height="1" fill="#909090"/><rect x="507" y="89" width="1" height="1" fill="#fff"/><rect x="510" y="88" width="1" height="1" fill="#909090"/><rect x="511" y="89" width="1" height="1" fill="#fff"/><rect x="506" y="92" width="1" height="1" fill="#909090"/><rect x="507" y="93" width="1" height="1" fill="#fff"/><rect x="510" y="92" width="1" height="1" fill="#909090"/><rect x="511" y="93" width="1" height="1" fill="#fff"/><rect x="506" y="96" width="1" height="1" fill="#909090"/><rect x="507" y="97" width="1" height="1" fill="#fff"/><rect x="510" y="96" width="1" height="1" fill="#909090"/><rect x="511" y="97" width="1" height="1" fill="#fff"/><rect x="506" y="100" width="1" height="1" fill="#909090"/><rect x="507" y="101" width="1" height="1" fill="#fff"/><rect x="510" y="100" width="1" height="1" fill="#909090"/><rect x="511" y="101" width="1" height="1" fill="#fff"/><rect x="506" y="104" width="1" height="1" fill="#909090"/><rect x="507" y="105" width="1" height="1" fill="#fff"/><rect x="510" y="104" width="1" height="1" fill="#909090"/><rect x="511" y="105" width="1" height="1" fill="#fff"/><rect x="506" y="108" width="1" height="1" fill="#909090"/><rect x="507" y="109" width="1" height="1" fill="#fff"/><rect x="510" y="108" width="1" height="1" fill="#909090"/><rect x="511" y="109" width="1" height="1" fill="#fff"/><rect x="90" y="55" width="1" height="22" fill="#a0a0a0"/><rect x="91" y="55" width="1" height="22" fill="#fff"/><rect x="167" y="55" width="1" height="22" fill="#a0a0a0"/><rect x="168" y="55" width="1" height="22" fill="#fff"/><rect x="221" y="55" width="1" height="22" fill="#a0a0a0"/><rect x="222" y="55" width="1" height="22" fill="#fff"/><rect x="252" y="55" width="1" height="22" fill="#a0a0a0"/><rect x="253" y="55" width="1" height="22" fill="#fff"/><rect x="284" y="55" width="1" height="22" fill="#a0a0a0"/><rect x="285" y="55" width="1" height="22" fill="#fff"/><rect x="377" y="55" width="1" height="22" fill="#a0a0a0"/><rect x="378" y="55" width="1" height="22" fill="#fff"/><rect x="431" y="55" width="1" height="22" fill="#a0a0a0"/><rect x="432" y="55" width="1" height="22" fill="#fff"/><rect x="571" y="55" width="1" height="22" fill="#a0a0a0"/><rect x="572" y="55" width="1" height="22" fill="#fff"/><rect x="648" y="55" width="1" height="22" fill="#a0a0a0"/><rect x="649" y="55" width="1" height="22" fill="#fff"/><rect x="44" y="85" width="1" height="22" fill="#a0a0a0"/><rect x="45" y="85" width="1" height="22" fill="#fff"/><rect x="121" y="85" width="1" height="22" fill="#a0a0a0"/><rect x="122" y="85" width="1" height="22" fill="#fff"/><rect x="268" y="85" width="1" height="22" fill="#a0a0a0"/><rect x="269" y="85" width="1" height="22" fill="#fff"/><rect x="344" y="85" width="1" height="22" fill="#a0a0a0"/><rect x="345" y="85" width="1" height="22" fill="#fff"/><rect x="467" y="85" width="1" height="22" fill="#a0a0a0"/><rect x="468" y="85" width="1" height="22" fill="#fff"/><rect x="607" y="85" width="1" height="22" fill="#a0a0a0"/><rect x="608" y="85" width="1" height="22" fill="#fff"/><g transform="translate(21,57)"><path d="M2.5 1.5 H9.5 L12.5 4.5 V13.5 H2.5 Z" fill="#fff" stroke="#a0a0a0"/><path d="M9.5 1.5 V4.5 H12.5" fill="none" stroke="#a0a0a0"/></g><g transform="translate(43,57)"><path d="M1 5 H6 L7 6 H12 V13 H1 Z" fill="#a0a0a0"/><path d="M3 8 H16 L12 14 H1 Z" fill="#a0a0a0"/><path d="M1.5 6 L4 6 L1.5 10Z" fill="#d0d0d0"/><path d="M9 3.5 Q12 0 15 3.5" fill="none" stroke="#a0a0a0" stroke-width="1.2"/><path d="M15.5 5 L13.5 3 H16Z" fill="#a0a0a0"/></g><g transform="translate(66,57)"><rect x="0.5" y="1" width="14.5" height="14" fill="#000"/><rect x="2.5" y="2" width="1" height="12" fill="#808000"/><rect x="12" y="2" width="1" height="12" fill="#808000"/><rect x="3" y="9" width="9.5" height="1" fill="#808000"/><rect x="3.5" y="2" width="8" height="5.5" fill="#fff"/><rect x="9.5" y="11" width="2" height="3" fill="#fff"/><rect x="13.3" y="1.5" width="1" height="1" fill="#fff"/></g><g transform="translate(98,57)"><path d="M4 1 L8 9 M12 1 L8 9" stroke="#a0a0a0" stroke-width="1.2"/><circle cx="5" cy="12.5" r="2.2" fill="none" stroke="#a0a0a0" stroke-width="1.3"/><circle cx="11" cy="12.5" r="2.2" fill="none" stroke="#a0a0a0" stroke-width="1.3"/></g><g transform="translate(120,57)"><path d="M1 1.5 H6.5 L8.5 3.5 V11 H1 Z" fill="#fff" stroke="#000" stroke-width="1.2"/><path d="M2.5 5.5H5 M2.5 7.5H6" stroke="#000"/><path d="M7 6.5 H12 L15 9.5 V15 H7 Z" fill="#fff" stroke="#000080" stroke-width="1.4"/><path d="M8.5 10.5H13 M8.5 12.5H13" stroke="#000"/></g><g transform="translate(143,57)"><rect x="0.5" y="2" width="13.5" height="13" rx="2" fill="#a0a0a0"/><rect x="4" y="1" width="6" height="2" fill="#a0a0a0"/><rect x="3.5" y="3.5" width="6" height="1" fill="#f0f0f0"/><rect x="7" y="9" width="9" height="7" fill="#f0f0f0"/><rect x="7.5" y="9.5" width="8" height="6" fill="none" stroke="#a0a0a0"/><path d="M9 12H13 M9 14H14" stroke="#a0a0a0"/></g><g transform="translate(174,57)"><path d="M4 6.5 Q8 3 12 5.5 Q14.5 8 11.5 11" fill="none" stroke="#a0a0a0" stroke-width="1.5"/><path d="M1.5 5 L6.5 10.5 H1.5Z" fill="#a0a0a0"/></g><g transform="translate(197,57)"><path d="M12 6.5 Q8 3 4 5.5 Q1.5 8 4.5 11" fill="none" stroke="#a0a0a0" stroke-width="1.5"/><path d="M14.5 5 L9.5 10.5 H14.5Z" fill="#a0a0a0"/></g><g transform="translate(228,57)"><path d="M4.5 2 H14 L12 7.5 H2.5Z" fill="#fff" stroke="#000" stroke-width="1.3"/><path d="M5.5 4H11.5 M5 6H11" stroke="#000" stroke-width=".8"/><rect x="0.8" y="7.5" width="14.5" height="7" rx="2.5" fill="#fff" stroke="#000" stroke-width="1.6"/><rect x="1" y="10.3" width="14" height="1.5" fill="#000"/><rect x="7" y="10.4" width="3" height="1.2" fill="#ee0"/><circle cx="13.5" cy="8.5" r="1" fill="#aaa"/></g><text x="257.5" y="69.5" font-family="Liberation Mono" font-size="10.5" fill="#a0a0a0" letter-spacing="-.2">Run</text><g transform="translate(290,57)"><text x="2" y="14.5" font-family="Liberation Sans" font-weight="bold" font-size="16" fill="#ff0" stroke="#000" stroke-width="1.3" paint-order="stroke">?</text></g><g transform="translate(331,57)"><circle cx="6" cy="6" r="4.5" fill="none" stroke="#a0a0a0" stroke-width="1.3"/><path d="M9 9 L14 14" stroke="#a0a0a0" stroke-width="2.5"/></g><g transform="translate(353,57)"><circle cx="7" cy="6" r="4" fill="none" stroke="#a0a0a0" stroke-width="2"/><path d="M10 9 L15 14" stroke="#a0a0a0" stroke-width="2.5"/><path d="M1 2 L12 10" stroke="#a0a0a0" stroke-width="2"/></g><rect x="381" y="56" width="23" height="20" rx="3" fill="#a0a0a0"/><g transform="translate(385,58)"><path d="M5 2 V13 L7.5 10.5 L10 15 L11.5 14 L9 9.5 H12.5Z" fill="#fff"/></g><g transform="translate(408,57)"><path d="M3 9 Q2 7 4 7 L5.5 9 V3.5 Q6.5 2 7.5 3.5 V7 V2 Q8.5 1 9.5 2 V7 V3 Q10.5 2 11.5 3 V7 V4.5 Q12.5 3.5 13.5 4.5 V10 L11.5 14.5 M4 9.5 L7 14" fill="none" stroke="#a0a0a0" stroke-width="1.1"/></g><rect x="435" y="56" width="46" height="20" rx="3" fill="#a0a0a0"/><rect x="457" y="56" width="1" height="1" fill="#f0f0f0"/><rect x="457" y="75" width="1" height="1" fill="#f0f0f0"/><g transform="translate(501,57)"><rect x="0" y="1" width="16" height="1.5" fill="#a0a0a0"/><rect x="1" y="4" width="4" height="9" fill="#a0a0a0"/><rect x="6.5" y="4.5" width="4" height="10" fill="#fff" stroke="#a0a0a0"/><path d="M13.5 5 V15" stroke="#a0a0a0"/><path d="M11.5 7 L13.5 4.5 L15.5 7Z" fill="#a0a0a0"/></g><g transform="translate(524,57)"><rect x="0" y="7" width="15" height="1.5" fill="#a0a0a0"/><rect x="3" y="2" width="4" height="10" fill="#a0a0a0"/><rect x="8.5" y="2.5" width="4" height="10" fill="#fff" stroke="#a0a0a0"/></g><g transform="translate(547,57)"><rect x="0" y="14" width="16" height="1.5" fill="#a0a0a0"/><rect x="1" y="3" width="4" height="9" fill="#a0a0a0"/><rect x="6.5" y="1.5" width="4" height="10.5" fill="#fff" stroke="#a0a0a0"/><path d="M13.5 2 V11" stroke="#a0a0a0"/><path d="M11.5 9 L13.5 11.5 L15.5 9Z" fill="#a0a0a0"/></g><g transform="translate(578,57)"><rect x="0" y="1" width="1.5" height="15" fill="#a0a0a0"/><rect x="3" y="2" width="10" height="3.5" fill="#a0a0a0"/><rect x="3.5" y="7.5" width="11" height="4" fill="#fff" stroke="#a0a0a0"/><path d="M4 14.5 H14" stroke="#a0a0a0"/><path d="M6 12.5 L3.5 14.5 L6 16.5Z" fill="#a0a0a0"/></g><g transform="translate(601,57)"><rect x="6.5" y="1" width="1.5" height="15" fill="#a0a0a0"/><rect x="3" y="3" width="9" height="3.5" fill="#a0a0a0"/><rect x="1.5" y="8.5" width="12" height="4" fill="#fff" stroke="#a0a0a0"/></g><g transform="translate(625,57)"><rect x="14.5" y="1" width="1.5" height="15" fill="#a0a0a0"/><rect x="3" y="2" width="10" height="3.5" fill="#a0a0a0"/><rect x="1.5" y="7.5" width="11" height="4" fill="#fff" stroke="#a0a0a0"/><path d="M2 14.5 H12" stroke="#a0a0a0"/><path d="M10 12.5 L12.5 14.5 L10 16.5Z" fill="#a0a0a0"/></g><g transform="translate(655,57)"><path d="M1 3.5 H3 V13.5 H1 M15 3.5 H13 V13.5 H15 M3.5 8.5 H12.5" fill="none" stroke="#a0a0a0" stroke-width="1.2"/><path d="M6 6.5 L3.5 8.5 L6 10.5Z M10 6.5 L12.5 8.5 L10 10.5Z" fill="#a0a0a0"/></g><g transform="translate(678,57)"><path d="M2 1 V3 H14 V1 M2 16 V14 H14 V16 M8 3.5 V13.5" fill="none" stroke="#a0a0a0" stroke-width="1.2"/><path d="M6 6 L8 3.5 L10 6Z M6 11 L8 13.5 L10 11Z" fill="#a0a0a0"/></g><g transform="translate(702,57)"><rect x="0.5" y="4.5" width="15" height="8" fill="#fff" stroke="#a0a0a0" stroke-width="1.2"/><path d="M3 8.5 H13" stroke="#a0a0a0" stroke-width="1.2"/><path d="M5.5 6.5 L2.5 8.5 L5.5 10.5Z M10.5 6.5 L13.5 8.5 L10.5 10.5Z" fill="#a0a0a0"/></g><g transform="translate(725,57)"><rect x="3.5" y="1.5" width="8" height="14" fill="#fff" stroke="#a0a0a0" stroke-width="1.2"/><path d="M7.5 4 V13" stroke="#a0a0a0" stroke-width="1.2"/><path d="M5.5 6 L7.5 3 L9.5 6Z M5.5 11 L7.5 14 L9.5 11Z" fill="#a0a0a0"/></g><g transform="translate(748,57)"><rect x="0.5" y="1.5" width="15" height="14" fill="#fff" stroke="#a0a0a0" stroke-width="1.2"/><path d="M8 3.5 V13.5 M2.5 8.5 H13.5" stroke="#a0a0a0" stroke-width="1.2"/><path d="M6 5.5 L8 3 L10 5.5Z M6 11.5 L8 14 L10 11.5Z M4.5 6.5 L2 8.5 L4.5 10.5Z M11.5 6.5 L14 8.5 L11.5 10.5Z" fill="#a0a0a0"/></g><g transform="translate(21,87)"><rect x="3.5" y="4.5" width="11" height="10" fill="#fff" stroke="#a0a0a0"/><rect x="4" y="4" width="10" height="2" fill="#a0a0a0"/><path d="M5.5 8.5 H9 M11 8.5H13 M5.5 11.5 H12" stroke="#a0a0a0" stroke-width="1.2"/><path d="M1 1h1M3 2h1M1 4h1M4 0h1" stroke="#a0a0a0"/></g><text x="51" y="101" font-family="Liberation Serif" font-style="italic" font-weight="bold" font-size="14" fill="#a0a0a0">Aa</text><text x="74" y="101" font-family="Liberation Sans" font-weight="bold" font-size="13" fill="#a0a0a0" letter-spacing="-.5">ab</text><rect x="89" y="89" width="1" height="13" fill="#a0a0a0"/><text x="97" y="101" font-family="Liberation Sans" font-weight="bold" font-size="13" fill="#a0a0a0" letter-spacing="-.5">12</text><rect x="112" y="89" width="1" height="13" fill="#a0a0a0"/><g transform="translate(128,87)"><path d="M0.5 4.5 V15.5 H15.5 V4.5 H14 M0.5 4.5 H2" fill="none" stroke="#a0a0a0" stroke-width="1.2"/><text x="2.5" y="6" font-family="Liberation Mono" font-size="6" fill="#a0a0a0">xyz</text></g><g transform="translate(150,87)"><circle cx="8" cy="8" r="5.5" fill="none" stroke="#a0a0a0" stroke-width="1.3"/><circle cx="8" cy="8" r="3" fill="#a0a0a0"/></g><g transform="translate(173,87)"><path d="M2.5 14 V2.5 H14" fill="none" stroke="#a0a0a0" stroke-width="1.6"/><path d="M4.5 7 L7 10.5 L12 4.5" fill="none" stroke="#a0a0a0" stroke-width="1.6"/></g><g transform="translate(197,87)"><rect x="1.5" y="5" width="13" height="8" rx="2" fill="none" stroke="#a0a0a0" stroke-width="1.3"/></g><g transform="translate(220,87)"><rect x="2.5" y="5" width="12" height="8" rx="1.5" fill="#a0a0a0"/><path d="M8.5 0V3 M1 2 L3 4 M16 2 L14 4 M1 16 L3 14 M16 16 L14 14 M8.5 14 V16" stroke="#a0a0a0"/></g><g transform="translate(243,87)"><circle cx="8" cy="8.5" r="5.5" fill="#a0a0a0"/><path d="M5 8 Q6 5 9 5" stroke="#f0f0f0" stroke-width="1" fill="none"/><circle cx="8" cy="8.5" r="7.5" fill="none" stroke="#a0a0a0" stroke-dasharray="1 1.5"/></g><g transform="translate(274,87)"><path d="M1 2 L15 15" stroke="#a0a0a0" stroke-width="1.2"/></g><g transform="translate(297,87)"><rect x="0.5" y="3.5" width="15" height="11" fill="none" stroke="#a0a0a0" stroke-width="1.2"/></g><g transform="translate(320,87)"><ellipse cx="8" cy="9" rx="7.5" ry="5.5" fill="none" stroke="#a0a0a0" stroke-width="1.2"/></g><g transform="translate(352,87)"><rect x="0.5" y="3.5" width="15" height="11" rx="2" fill="none" stroke="#a0a0a0" stroke-width="1.3"/><text x="3" y="12.5" font-family="Liberation Sans" font-size="9" fill="#a0a0a0">F1</text></g><g transform="translate(374,87)"><rect x="0.5" y="2.5" width="15" height="12" fill="none" stroke="#a0a0a0" stroke-width="1.3"/><path d="M1 6.5H15 M1 10.5H15 M7.5 3V14" stroke="#a0a0a0" stroke-width="1.2"/></g><g transform="translate(397,87)"><path d="M1 1 V15 H16" fill="none" stroke="#a0a0a0" stroke-width="1.2"/><path d="M2 9 L6 5 L9 8 L15 2 M2 12 L6 9 L9 11 L15 6 M2 14 L7 12 L15 10" fill="none" stroke="#a0a0a0"/></g><g transform="translate(420,87)"><path d="M1 1V15H16" fill="none" stroke="#a0a0a0" stroke-width="1.2"/><rect x="3" y="8" width="2" height="6" fill="#a0a0a0"/><rect x="7" y="5" width="2" height="9" fill="#a0a0a0"/><rect x="11" y="2" width="2" height="12" fill="#a0a0a0"/></g><g transform="translate(443,87)"><circle cx="8" cy="10" r="5.5" fill="none" stroke="#a0a0a0" stroke-width="1.2"/><path d="M6 2H10 M8 2V4 M8 10 L6 8 M8 10 L11 8" stroke="#a0a0a0"/></g><g transform="translate(475,87)"><path d="M1.5 9 L8 6 L15 9 L8 12Z M1.5 11 L8 14 L15 11 M1.5 13 L8 16 L15 13" fill="none" stroke="#a0a0a0"/><path d="M6 1H10V5H12L8 9L4 5H6Z" fill="#a0a0a0"/></g><path d="M514 88H521V91H527V96H530V103H523V100H517V95H514Z" fill="#a0a0a0"/><path d="M537 88H544V91H550V96H553V103H546V100H540V95H537Z" fill="#a0a0a0"/><path d="M560 88H572V94H576V103H567V99H560Z" fill="#a0a0a0"/><path d="M583 88H595V94H599V103H590V99H583Z" fill="#a0a0a0"/><g transform="translate(614,87)"><rect x="2.5" y="2.5" width="9" height="11" fill="none" stroke="#a0a0a0" stroke-width="1.2"/><path d="M7 4V11" stroke="#a0a0a0"/><path d="M5 6.5L7 4L9 6.5Z" fill="#a0a0a0"/><path d="M2 15.5H12" stroke="#a0a0a0" stroke-dasharray="1 1"/></g><g transform="translate(637,87)"><rect x="2.5" y="3.5" width="9" height="12" fill="none" stroke="#a0a0a0" stroke-width="1.2"/><path d="M7 5V13" stroke="#a0a0a0"/><path d="M5 10.5L7 13L9 10.5Z" fill="#a0a0a0"/><path d="M2 1.5H12" stroke="#a0a0a0" stroke-dasharray="1 1"/></g><g transform="translate(660,87)"><rect x="0.5" y="4.5" width="12" height="9" fill="none" stroke="#a0a0a0" stroke-width="1.2"/><path d="M3 9H11" stroke="#a0a0a0"/><path d="M5.5 7L3 9L5.5 11Z" fill="#a0a0a0"/><path d="M14.5 4V14" stroke="#a0a0a0" stroke-dasharray="1 1"/></g><g transform="translate(683,87)"><rect x="3.5" y="4.5" width="12" height="9" fill="none" stroke="#a0a0a0" stroke-width="1.2"/><path d="M5 9H13" stroke="#a0a0a0"/><path d="M10.5 7L13 9L10.5 11Z" fill="#a0a0a0"/><path d="M1.5 4V14" stroke="#a0a0a0" stroke-dasharray="1 1"/></g><rect x="13" y="118" width="202" height="1" fill="#a0a0a0"/><rect x="13" y="119" width="202" height="1" fill="#fff"/><rect x="13" y="122" width="202" height="1" fill="#a0a0a0"/><rect x="13" y="123" width="202" height="1" fill="#fff"/><path d="M220 121 L223.5 117 L227 121Z" fill="#000"/><path d="M234.8 116.3 L240.2 121.7 M240.2 116.3 L234.8 121.7" stroke="#000" stroke-width="1.8"/><rect x="11" y="127" width="234" height="1" fill="#a0a0a0"/><rect x="11" y="128" width="234" height="1" fill="#fff"/><rect x="14" y="130" width="1" height="1" fill="#909090"/><rect x="15" y="131" width="1" height="1" fill="#fff"/><rect x="18" y="130" width="1" height="1" fill="#909090"/><rect x="19" y="131" width="1" height="1" fill="#fff"/><rect x="14" y="134" width="1" height="1" fill="#909090"/><rect x="15" y="135" width="1" height="1" fill="#fff"/><rect x="18" y="134" width="1" height="1" fill="#909090"/><rect x="19" y="135" width="1" height="1" fill="#fff"/><rect x="14" y="138" width="1" height="1" fill="#909090"/><rect x="15" y="139" width="1" height="1" fill="#fff"/><rect x="18" y="138" width="1" height="1" fill="#909090"/><rect x="19" y="139" width="1" height="1" fill="#fff"/><rect x="14" y="142" width="1" height="1" fill="#909090"/><rect x="15" y="143" width="1" height="1" fill="#fff"/><rect x="18" y="142" width="1" height="1" fill="#909090"/><rect x="19" y="143" width="1" height="1" fill="#fff"/><rect x="14" y="146" width="1" height="1" fill="#909090"/><rect x="15" y="147" width="1" height="1" fill="#fff"/><rect x="18" y="146" width="1" height="1" fill="#909090"/><rect x="19" y="147" width="1" height="1" fill="#fff"/><rect x="14" y="150" width="1" height="1" fill="#909090"/><rect x="15" y="151" width="1" height="1" fill="#fff"/><rect x="18" y="150" width="1" height="1" fill="#909090"/><rect x="19" y="151" width="1" height="1" fill="#fff"/><g transform="translate(24,133)"><rect x="4.5" y="1" width="6.5" height="3" rx="1" fill="#fff" stroke="#000" stroke-width="1.3"/><rect x="0.9" y="3.6" width="13.6" height="11" rx="2.8" fill="#fff" stroke="#000" stroke-width="1.7"/><rect x="2.6" y="5.4" width="10.2" height="7.4" rx="1" fill="url(#hatch)" stroke="#8a8a8a" stroke-width=".9"/><path d="M12.2 4.2H15.2 M13.7 2.7V5.7" stroke="#f00" stroke-width="1.3"/><rect x="13" y="6" width="1.6" height="2" fill="#0c0"/></g><g transform="translate(46,133)"><path d="M2.5 0.5 H10 L13.5 4 V15.5 H2.5Z" fill="#fff" stroke="#000" stroke-width="1.2"/><path d="M4.5 4.5 H9" stroke="#090" stroke-width="1.2"/><path d="M4.5 7.5H11.5 M4.5 10H11.5 M4.5 12.5H11.5" stroke="#555"/></g><rect x="70" y="130" width="1" height="22" fill="#a0a0a0"/><rect x="71" y="130" width="1" height="22" fill="#fff"/><rect x="101" y="130" width="1" height="22" fill="#a0a0a0"/><rect x="102" y="130" width="1" height="22" fill="#fff"/><rect x="132" y="130" width="1" height="22" fill="#a0a0a0"/><rect x="133" y="130" width="1" height="22" fill="#fff"/><g transform="translate(77,134)"><path d="M5 7 H9 V3 L14 7.5 L9 12 V9 H5Z" fill="#a0a0a0"/><circle cx="3.5" cy="12.5" r="2.5" fill="none" stroke="#a0a0a0"/><circle cx="8.5" cy="12.5" r="2.5" fill="none" stroke="#a0a0a0"/><path d="M12 12 L16 7" stroke="#a0a0a0"/></g><g transform="translate(108,134)"><rect x="3.5" y="4.5" width="12" height="10" fill="#fff" stroke="#a0a0a0" stroke-width="1.2"/><path d="M6 9 H9 M10.5 9H13 M6 12H13" stroke="#a0a0a0"/><path d="M1 1 L6 6 M6 1 L1 6" stroke="#a0a0a0" stroke-width="2"/></g><g transform="translate(140,133)"><path d="M7 1 L12.5 7 H9 V14 H6 V10 Q6 7 3 7 H1.5Z" fill="#a0a0a0"/></g><g transform="translate(164,133)"><path d="M7 15 L12.5 9 H9 V2 H6 V6 Q6 9 3 9 H1.5Z" fill="#a0a0a0"/></g><rect x="17.5" y="182.5" width="8" height="8" rx="1" fill="#f4f4f4" stroke="#8e8f8f"/><rect x="19" y="186" width="5" height="1" fill="#3a5a9a"/><rect x="26" y="186" width="1" height="1" fill="#a0a0a0"/><rect x="28" y="186" width="1" height="1" fill="#a0a0a0"/><rect x="30" y="186" width="1" height="1" fill="#a0a0a0"/><rect x="32" y="186" width="1" height="1" fill="#a0a0a0"/><g transform="translate(33,178)"><path d="M3.5 1.5 H10 L12.5 4 V13.5 H3.5Z" fill="#fff" stroke="#000" stroke-width="1.3"/><path d="M10 1.5V4H12.5" fill="none" stroke="#000"/></g><rect x="41" y="194" width="1" height="1" fill="#a0a0a0"/><rect x="41" y="196" width="1" height="1" fill="#a0a0a0"/><rect x="37.5" y="198.5" width="8" height="8" rx="1" fill="#f4f4f4" stroke="#8e8f8f"/><rect x="39" y="202" width="5" height="1" fill="#3a5a9a"/><rect x="46" y="202" width="1" height="1" fill="#a0a0a0"/><rect x="48" y="202" width="1" height="1" fill="#a0a0a0"/><rect x="50" y="202" width="1" height="1" fill="#a0a0a0"/><rect x="52" y="202" width="1" height="1" fill="#a0a0a0"/><g transform="translate(53,194)"><rect x="4.5" y="1" width="6.5" height="3" rx="1" fill="#fff" stroke="#000" stroke-width="1.3"/><rect x="0.9" y="3.6" width="13.6" height="11" rx="2.8" fill="#fff" stroke="#000" stroke-width="1.7"/><rect x="2.6" y="5.4" width="10.2" height="7.4" rx="1" fill="url(#hatch)" stroke="#8a8a8a" stroke-width=".9"/><path d="M12.2 4.2H15.2 M13.7 2.7V5.7" stroke="#f00" stroke-width="1.3"/><rect x="13" y="6" width="1.6" height="2" fill="#0c0"/></g><rect x="61" y="210" width="1" height="1" fill="#a0a0a0"/><rect x="61" y="212" width="1" height="1" fill="#a0a0a0"/><rect x="61" y="214" width="1" height="1" fill="#a0a0a0"/><rect x="61" y="216" width="1" height="1" fill="#a0a0a0"/><rect x="61" y="218" width="1" height="1" fill="#a0a0a0"/><rect x="61" y="220" width="1" height="1" fill="#a0a0a0"/><rect x="61" y="222" width="1" height="1" fill="#a0a0a0"/><rect x="61" y="224" width="1" height="1" fill="#a0a0a0"/><rect x="61" y="226" width="1" height="1" fill="#a0a0a0"/><rect x="61" y="228" width="1" height="1" fill="#a0a0a0"/><rect x="61" y="230" width="1" height="1" fill="#a0a0a0"/><rect x="61" y="232" width="1" height="1" fill="#a0a0a0"/><rect x="61" y="234" width="1" height="1" fill="#a0a0a0"/><rect x="62" y="218" width="1" height="1" fill="#a0a0a0"/><rect x="64" y="218" width="1" height="1" fill="#a0a0a0"/><rect x="66" y="218" width="1" height="1" fill="#a0a0a0"/><rect x="68" y="218" width="1" height="1" fill="#a0a0a0"/><rect x="70" y="218" width="1" height="1" fill="#a0a0a0"/><rect x="72" y="218" width="1" height="1" fill="#a0a0a0"/><rect x="62" y="234" width="1" height="1" fill="#a0a0a0"/><rect x="64" y="234" width="1" height="1" fill="#a0a0a0"/><rect x="66" y="234" width="1" height="1" fill="#a0a0a0"/><rect x="68" y="234" width="1" height="1" fill="#a0a0a0"/><rect x="70" y="234" width="1" height="1" fill="#a0a0a0"/><rect x="72" y="234" width="1" height="1" fill="#a0a0a0"/><g transform="translate(73,211)"><rect x="0" y="0" width="16" height="5" fill="#c0c0c0"/><rect x="1.5" y="5.5" width="13" height="8" fill="#c8c8c8" stroke="#0000a0"/><rect x="3" y="7" width="10" height="5" fill="#d8d8d8"/><rect x="1" y="5" width="2" height="2" fill="#000"/><rect x="13" y="5" width="2" height="2" fill="#000"/><rect x="1" y="12" width="2" height="2" fill="#000"/><rect x="13" y="12" width="2" height="2" fill="#000"/><rect x="7" y="5" width="2" height="1.5" fill="#000"/><rect x="7" y="12.5" width="2" height="1.5" fill="#000"/></g><g transform="translate(73,227)"><rect x="0" y="0" width="16" height="5" fill="#c0c0c0"/><rect x="1.5" y="5.5" width="13" height="8" fill="#c8c8c8" stroke="#0000a0"/><rect x="3" y="7" width="10" height="5" fill="#d8d8d8"/><rect x="1" y="5" width="2" height="2" fill="#000"/><rect x="13" y="5" width="2" height="2" fill="#000"/><rect x="1" y="12" width="2" height="2" fill="#000"/><rect x="13" y="12" width="2" height="2" fill="#000"/><rect x="7" y="5" width="2" height="1.5" fill="#000"/><rect x="7" y="12.5" width="2" height="1.5" fill="#000"/></g><rect x="13" y="416" width="202" height="1" fill="#a0a0a0"/><rect x="13" y="417" width="202" height="1" fill="#fff"/><rect x="13" y="420" width="202" height="1" fill="#a0a0a0"/><rect x="13" y="421" width="202" height="1" fill="#fff"/><path d="M220 419 L223.5 415 L227 419Z" fill="#000"/><path d="M234.8 414.3 L240.2 419.7 M240.2 414.3 L234.8 419.7" stroke="#000" stroke-width="1.8"/><rect x="15.5" y="430.5" width="9" height="9" fill="#fff" stroke="#808080"/><rect x="17" y="434" width="6" height="1.2" fill="#000"/><path d="M233 436 L236.5 432.5 L240 436Z" fill="#606060"/><path d="M233 638 L236.5 641.5 L240 638Z" fill="#606060"/><path d="M233.5 494.5H239.5 M233.5 496.5H239.5 M233.5 498.5H239.5" stroke="#606060"/><g transform="translate(266,122)"><rect x="4.5" y="1" width="6.5" height="3" rx="1" fill="#fff" stroke="#000" stroke-width="1.3"/><rect x="0.9" y="3.6" width="13.6" height="11" rx="2.8" fill="#fff" stroke="#000" stroke-width="1.7"/><rect x="2.6" y="5.4" width="10.2" height="7.4" rx="1" fill="url(#hatch)" stroke="#8a8a8a" stroke-width=".9"/><path d="M12.2 4.2H15.2 M13.7 2.7V5.7" stroke="#f00" stroke-width="1.3"/><rect x="13" y="6" width="1.6" height="2" fill="#0c0"/></g><rect x="839.0" y="131.0" width="11" height="5" rx="1" fill="#f4f6f9" stroke="#3b4757"/><rect x="873.0" y="126.5" width="10" height="9" rx="1" fill="#f4f6f9" stroke="#3b4757"/><rect x="875.5" y="129.0" width="5" height="3" fill="#c8d4e2" stroke="#3b4757"/><path d="M906.0 127.0 L915.0 134.0 M915.0 127.0 L906.0 134.0" stroke="#3b4757" stroke-width="4" stroke-linecap="round"/><path d="M906.0 127.0 L915.0 134.0 M915.0 127.0 L906.0 134.0" stroke="#f4f6f9" stroke-width="2.2" stroke-linecap="round"/><rect x="280" y="154" width="2" height="2" fill="#0a0"/><rect x="267" y="146" width="1" height="1" fill="#909090"/><rect x="268" y="147" width="1" height="1" fill="#fff"/><rect x="271" y="146" width="1" height="1" fill="#909090"/><rect x="272" y="147" width="1" height="1" fill="#fff"/><rect x="267" y="150" width="1" height="1" fill="#909090"/><rect x="268" y="151" width="1" height="1" fill="#fff"/><rect x="271" y="150" width="1" height="1" fill="#909090"/><rect x="272" y="151" width="1" height="1" fill="#fff"/><rect x="267" y="154" width="1" height="1" fill="#909090"/><rect x="268" y="155" width="1" height="1" fill="#fff"/><rect x="271" y="154" width="1" height="1" fill="#909090"/><rect x="272" y="155" width="1" height="1" fill="#fff"/><rect x="267" y="158" width="1" height="1" fill="#909090"/><rect x="268" y="159" width="1" height="1" fill="#fff"/><rect x="271" y="158" width="1" height="1" fill="#909090"/><rect x="272" y="159" width="1" height="1" fill="#fff"/><rect x="267" y="162" width="1" height="1" fill="#909090"/><rect x="268" y="163" width="1" height="1" fill="#fff"/><rect x="271" y="162" width="1" height="1" fill="#909090"/><rect x="272" y="163" width="1" height="1" fill="#fff"/><rect x="267" y="166" width="1" height="1" fill="#909090"/><rect x="268" y="167" width="1" height="1" fill="#fff"/><rect x="271" y="166" width="1" height="1" fill="#909090"/><rect x="272" y="167" width="1" height="1" fill="#fff"/><rect x="380.5" y="517.5" width="6" height="6" fill="#000" stroke="#fff" stroke-width="1"/><rect x="480.5" y="517.5" width="6" height="6" fill="#000" stroke="#fff" stroke-width="1"/><rect x="580.5" y="517.5" width="6" height="6" fill="#000" stroke="#fff" stroke-width="1"/><rect x="380.5" y="547.5" width="6" height="6" fill="#000" stroke="#fff" stroke-width="1"/><rect x="580.5" y="547.5" width="6" height="6" fill="#000" stroke="#fff" stroke-width="1"/><rect x="380.5" y="577.5" width="6" height="6" fill="#000" stroke="#fff" stroke-width="1"/><rect x="480.5" y="577.5" width="6" height="6" fill="#000" stroke="#fff" stroke-width="1"/><rect x="580.5" y="577.5" width="6" height="6" fill="#000" stroke="#fff" stroke-width="1"/><rect x="845.5" y="615.5" width="11" height="11" fill="#fff" stroke="#555"/><path d="M848 624 L854 618 M851 618H854V621" stroke="#555" stroke-width="1.3" fill="none"/><circle cx="327" cy="648" r="4.5" fill="#707070"/><circle cx="326" cy="647" r="2.5" fill="#9a9a9a"/></svg>
<div style="left:281px;top:137px;width:519px;height:354px;border:1px solid #2f3c4c;border-radius:6px 6px 0 0;background:linear-gradient(180deg,#99b4d4 0,#a9c2df 12px,#bcd2ea 28px,#bfd5ec 40px,#bfd5ec 100%)"></div>
<div style="left:282px;top:138px;width:517px;height:352px;border:1px solid rgba(255,255,255,.45);border-top-color:rgba(255,255,255,.7);border-radius:5px 5px 0 0;border-right-color:#7fd0f0"></div>
<span class="t" style="left:311px;top:148px;font-size:13px;color:#1e2d44">Source - Panel1</span>
<div style="left:693px;top:147px;width:31px;height:17px;border:1px solid #5b6e87;border-radius:3px;background:linear-gradient(180deg,#e4edf7 0,#cddcee 45%,#adc4df 55%,#c3d6ec 100%);box-shadow:inset 0 0 0 1px rgba(255,255,255,.45)"></div>
<div style="left:726px;top:147px;width:31px;height:17px;border:1px solid #5b6e87;border-radius:3px;background:linear-gradient(180deg,#e4edf7 0,#cddcee 45%,#adc4df 55%,#c3d6ec 100%);box-shadow:inset 0 0 0 1px rgba(255,255,255,.45)"></div>
<div style="left:759px;top:147px;width:31px;height:17px;border:1px solid #7a2e22;border-radius:3px;background:linear-gradient(180deg,#eab0a2 0,#d98a74 45%,#c2442a 55%,#d5664a 100%);box-shadow:inset 0 0 0 1px rgba(255,255,255,.45)"></div>
<div style="left:289px;top:167px;width:503px;height:316px;background:#f0f0f0;border-top:1px solid #6a6a6a;border-left:1px solid #6a6a6a"></div>
<div style="left:329px;top:170px;width:200px;height:24px;border:1px solid #707070;border-radius:3px;background:linear-gradient(180deg,#f2f2f2 0,#ebebeb 50%,#dddddd 51%,#cfcfcf 100%)"></div>
<span class="t" style="left:334px;top:174px;font-size:14px;color:#000">PB1</span>
<div style="left:536px;top:170px;width:202px;height:24px;border:1px solid #707070;border-radius:3px;background:linear-gradient(180deg,#f2f2f2 0,#ebebeb 50%,#dddddd 51%,#cfcfcf 100%)"></div>
<span class="t" style="left:541px;top:174px;font-size:14px;color:#000">CLICKED</span>
<div style="left:290px;top:196px;width:502px;height:287px;background:#fff;border-top:2px solid #6a6a6a;border-left:1px solid #6a6a6a"></div>
<div style="left:291px;top:198px;width:60px;height:267px;background:#f0f0f0"></div>
<div style="left:774px;top:198px;width:18px;height:267px;background:#f0f0f0;border-left:1px solid #e8e8e8"></div>
<div style="left:291px;top:465px;width:483px;height:17px;background:#f0f0f0;border-top:1px solid #e8e8e8"></div>
<div style="left:308px;top:466px;width:16px;height:14px;background:linear-gradient(180deg,#f4f4f4,#dcdcdc);border:1px solid #9a9a9a;border-radius:2px"></div>
<div style="left:774px;top:465px;width:18px;height:17px;background:#f0f0f0"></div>
<div style="left:798px;top:145px;width:1px;height:345px;background:#3fd2f2"></div>
<div style="left:282px;top:489px;width:517px;height:1px;background:#3fd2f2"></div>
<span class="t" style="left:312px;top:200px;font-family:'Liberation Sans',sans-serif;font-size:10.5px;color:#2b6fd0">00001</span>
<span class="t" style="left:352px;top:199px;font-family:'Liberation Mono',monospace;font-size:13.33px;font-weight:bold;letter-spacing:0;white-space:pre"><span style="position:static;color:#ff0000">#</span><span style="position:static;color:#0000ff">include</span><span style="position:static;color:#000"> </span><span style="position:static;color:#ff0000">&lt;</span><span style="position:static;color:#000">PanelMain.h</span><span style="position:static;color:#ff0000">&gt;</span><span style="position:static;color:#000"> raw</span></span>
<span class="t" style="left:312px;top:216px;font-family:'Liberation Sans',sans-serif;font-size:10.5px;color:#2b6fd0">00002</span>
<span class="t" style="left:352px;top:215px;font-family:'Liberation Mono',monospace;font-size:13.33px;font-weight:bold;letter-spacing:0;white-space:pre"></span>
<span class="t" style="left:312px;top:232px;font-family:'Liberation Sans',sans-serif;font-size:10.5px;color:#2b6fd0">00003</span>
<span class="t" style="left:352px;top:231px;font-family:'Liberation Mono',monospace;font-size:13.33px;font-weight:bold;letter-spacing:0;white-space:pre"><span style="position:static;color:#0000ff">Sub</span><span style="position:static;color:#000"> PB1_CLICKED()</span></span>
<span class="t" style="left:312px;top:248px;font-family:'Liberation Sans',sans-serif;font-size:10.5px;color:#2b6fd0">00004</span>
<span class="t" style="left:352px;top:247px;font-family:'Liberation Mono',monospace;font-size:13.33px;font-weight:bold;letter-spacing:0;white-space:pre"><span style="position:static;color:#000">    </span><span style="position:static;color:#0000ff">PageChange</span><span style="position:static;color:#000"> ..</span><span style="position:static;color:#ff0000">\</span><span style="position:static;color:#000">..</span><span style="position:static;color:#ff0000">\</span><span style="position:static;color:#000">Main</span></span>
<span class="t" style="left:312px;top:264px;font-family:'Liberation Sans',sans-serif;font-size:10.5px;color:#2b6fd0">00005</span>
<span class="t" style="left:352px;top:263px;font-family:'Liberation Mono',monospace;font-size:13.33px;font-weight:bold;letter-spacing:0;white-space:pre"><span style="position:static;color:#0000ff">End Sub</span></span>
<span class="t" style="left:312px;top:280px;font-family:'Liberation Sans',sans-serif;font-size:10.5px;color:#2b6fd0">00006</span>
<span class="t" style="left:352px;top:279px;font-family:'Liberation Mono',monospace;font-size:13.33px;font-weight:bold;letter-spacing:0;white-space:pre"></span>
<span class="t" style="left:312px;top:296px;font-family:'Liberation Sans',sans-serif;font-size:10.5px;color:#2b6fd0">00007</span>
<span class="t" style="left:352px;top:295px;font-family:'Liberation Mono',monospace;font-size:13.33px;font-weight:bold;letter-spacing:0;white-space:pre"><span style="position:static;color:#0000ff">Sub</span><span style="position:static;color:#000"> PB2_CLICKED()</span></span>
<span class="t" style="left:312px;top:312px;font-family:'Liberation Sans',sans-serif;font-size:10.5px;color:#2b6fd0">00008</span>
<span class="t" style="left:352px;top:311px;font-family:'Liberation Mono',monospace;font-size:13.33px;font-weight:bold;letter-spacing:0;white-space:pre"><span style="position:static;color:#000">    </span><span style="position:static;color:#0000ff">PageChange</span><span style="position:static;color:#000"> ..</span><span style="position:static;color:#ff0000">\</span><span style="position:static;color:#000">Panel1</span></span>
<span class="t" style="left:312px;top:328px;font-family:'Liberation Sans',sans-serif;font-size:10.5px;color:#2b6fd0">00009</span>
<span class="t" style="left:352px;top:327px;font-family:'Liberation Mono',monospace;font-size:13.33px;font-weight:bold;letter-spacing:0;white-space:pre"><span style="position:static;color:#0000ff">End Sub</span></span>
<span class="t" style="left:312px;top:344px;font-family:'Liberation Sans',sans-serif;font-size:10.5px;color:#2b6fd0">00010</span>
<span class="t" style="left:352px;top:343px;font-family:'Liberation Mono',monospace;font-size:13.33px;font-weight:bold;letter-spacing:0;white-space:pre"></span>
<div style="left:8px;top:697px;width:944px;height:22px;background:#f0efed;border-top:1px solid #c8c8c8;box-shadow:inset 0 1px 0 #fff, inset 0 2px 0 #a0a0a0"></div>
<span class="t" style="left:11px;top:704px;font-size:12px;color:#000">Ready</span>
<span class="t" style="left:647px;top:704px;font-size:12px;color:#000">X:</span>
<span class="t" style="left:670px;top:704px;font-size:12px;color:#000">151</span>
<span class="t" style="left:694px;top:704px;font-size:12px;color:#000">Y:</span>
<span class="t" style="left:717px;top:704px;font-size:12px;color:#000">349</span>
<span class="t" style="left:816px;top:704px;font-size:12px;color:#000">NUM</span>
<span class="t" style="left:892px;top:704px;font-size:12px;color:#000">RC8</span>
<svg style="position:absolute;left:0;top:0" width="960" height="727"><g transform="translate(292,147)"><path d="M0.5 0.5 H10 L12.5 3 V15.5 H0.5Z" fill="#fff" stroke="#555"/><path d="M2.5 4.5 H9" stroke="#0a0" stroke-width="1.2"/><path d="M2.5 7.5H11 M2.5 9.5H11" stroke="#555"/></g><rect x="703.0" y="156.0" width="11" height="5" rx="1" fill="#fff" stroke="#333d4a"/><rect x="737.0" y="151.5" width="10" height="9" rx="1" fill="#fff" stroke="#333d4a"/><rect x="739.5" y="154.0" width="5" height="3" fill="#8fb0da" stroke="#333d4a"/><path d="M771.2 153.5 L777.8 157.5 M777.8 153.5 L771.2 157.5" stroke="#3a2a30" stroke-width="4.4" stroke-linecap="square"/><path d="M771.2 153.5 L777.8 157.5 M777.8 153.5 L771.2 157.5" stroke="#fff" stroke-width="2.4" stroke-linecap="square"/><rect x="292" y="171" width="1" height="1" fill="#909090"/><rect x="293" y="172" width="1" height="1" fill="#fff"/><rect x="296" y="171" width="1" height="1" fill="#909090"/><rect x="297" y="172" width="1" height="1" fill="#fff"/><rect x="292" y="175" width="1" height="1" fill="#909090"/><rect x="293" y="176" width="1" height="1" fill="#fff"/><rect x="296" y="175" width="1" height="1" fill="#909090"/><rect x="297" y="176" width="1" height="1" fill="#fff"/><rect x="292" y="179" width="1" height="1" fill="#909090"/><rect x="293" y="180" width="1" height="1" fill="#fff"/><rect x="296" y="179" width="1" height="1" fill="#909090"/><rect x="297" y="180" width="1" height="1" fill="#fff"/><rect x="292" y="183" width="1" height="1" fill="#909090"/><rect x="293" y="184" width="1" height="1" fill="#fff"/><rect x="296" y="183" width="1" height="1" fill="#909090"/><rect x="297" y="184" width="1" height="1" fill="#fff"/><rect x="292" y="187" width="1" height="1" fill="#909090"/><rect x="293" y="188" width="1" height="1" fill="#fff"/><rect x="296" y="187" width="1" height="1" fill="#909090"/><rect x="297" y="188" width="1" height="1" fill="#fff"/><rect x="292" y="191" width="1" height="1" fill="#909090"/><rect x="293" y="192" width="1" height="1" fill="#fff"/><rect x="296" y="191" width="1" height="1" fill="#909090"/><rect x="297" y="192" width="1" height="1" fill="#fff"/><rect x="325" y="171" width="1" height="22" fill="#a0a0a0"/><rect x="326" y="171" width="1" height="22" fill="#fff"/><g transform="translate(300,174)"><rect x="4.5" y="1" width="6.5" height="3" rx="1" fill="#fff" stroke="#000" stroke-width="1.3"/><rect x="0.9" y="3.6" width="13.6" height="11" rx="2.8" fill="#fff" stroke="#000" stroke-width="1.7"/><rect x="2.6" y="5.4" width="10.2" height="7.4" rx="1" fill="url(#hatch)" stroke="#8a8a8a" stroke-width=".9"/><path d="M12.2 4.2H15.2 M13.7 2.7V5.7" stroke="#f00" stroke-width="1.3"/><rect x="13" y="6" width="1.6" height="2" fill="#0c0"/></g><path d="M513 180 L521 180 L517 184Z" fill="#000"/><path d="M722 180 L730 180 L726 184Z" fill="#000"/><rect x="741" y="171" width="1" height="22" fill="#a0a0a0"/><rect x="742" y="171" width="1" height="22" fill="#fff"/><g transform="translate(748,173)"><path d="M6 2H15 M8 5H15 M8 8H15 M8 11H15 M6 14H15" stroke="#a8a8a8" stroke-width="1.3"/><path d="M0 8H5 M3 6L5 8L3 10" stroke="#a8a8a8" stroke-width="1.2" fill="none"/><path d="M5 0V17" stroke="#a8a8a8" stroke-dasharray="1 1"/></g><g transform="translate(771,173)"><path d="M6 2H15 M8 5H15 M8 8H15 M8 11H15 M6 14H15" stroke="#a8a8a8" stroke-width="1.3"/><path d="M0 8H5 M2 6L0 8L2 10" stroke="#a8a8a8" stroke-width="1.2" fill="none"/><path d="M5 0V17" stroke="#a8a8a8" stroke-dasharray="1 1"/></g><path d="M778.5 209 L782.5 205 L786.5 209Z" fill="#8a8a8a"/><path d="M778.5 453 L782.5 457 L786.5 453Z" fill="#8a8a8a"/><path d="M300 468.5 L296.5 472.5 L300 476.5Z" fill="#606060"/><path d="M763 468.5 L766.5 472.5 L763 476.5Z" fill="#606060"/><path d="M788 479H789 M785 479H786 M788 476H789 M782 479H783 M785 476H786 M788 473H789" stroke="#a0a0a0"/><rect x="691" y="701" width="1" height="16" fill="#d0cec9"/><rect x="692" y="701" width="1" height="16" fill="#fff"/><rect x="738" y="701" width="1" height="16" fill="#d0cec9"/><rect x="739" y="701" width="1" height="16" fill="#fff"/><rect x="781" y="701" width="1" height="16" fill="#d0cec9"/><rect x="782" y="701" width="1" height="16" fill="#fff"/><rect x="812" y="701" width="1" height="16" fill="#d0cec9"/><rect x="813" y="701" width="1" height="16" fill="#fff"/><rect x="851" y="701" width="1" height="16" fill="#d0cec9"/><rect x="852" y="701" width="1" height="16" fill="#fff"/><rect x="888" y="701" width="1" height="16" fill="#d0cec9"/><rect x="889" y="701" width="1" height="16" fill="#fff"/><rect x="932" y="701" width="1" height="16" fill="#d0cec9"/><rect x="933" y="701" width="1" height="16" fill="#fff"/><path d="M946 715h1M943 715h1M940 715h1M946 712h1M943 712h1M946 709h1" stroke="#a0a0a0"/></svg></body></html>
